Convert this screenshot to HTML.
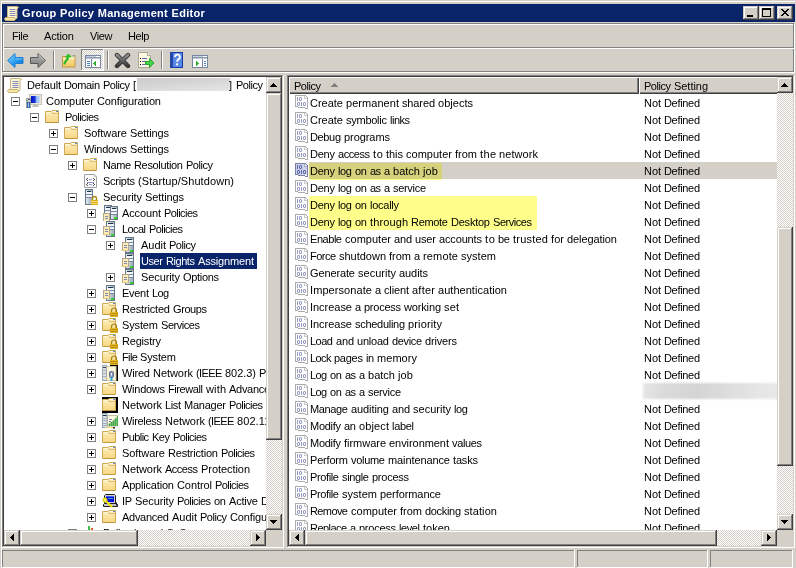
<!DOCTYPE html><html><head><meta charset="utf-8"><style>
html,body{margin:0;padding:0}body{width:796px;height:568px;overflow:hidden;position:relative;background:#d4d0c8;font-family:"Liberation Sans",sans-serif;font-size:11px;color:#000}
div,svg,span{position:absolute;display:block}
.t{white-space:nowrap;line-height:16px;height:16px;will-change:transform}
.dith{background-color:#d4d0c8;background-image:repeating-conic-gradient(#fff 0% 25%,#d4d0c8 0% 50%);background-size:2px 2px}
.clip{overflow:hidden}
</style></head><body>
<div style="left:0px;top:0px;width:796px;height:1px;background:#d4d0c8;"></div>
<div style="left:1px;top:1px;width:794px;height:1px;background:#ffffff;"></div>
<div style="left:1px;top:1px;width:1px;height:567px;background:#ffffff;"></div>
<div style="left:2px;top:4px;width:793px;height:18px;background:#0a246a;"></div>
<svg style="left:4px;top:5px;" width="16" height="16" viewBox="0 0 16 16"><path d="M3.5 1.5h9.5l1.5 1-1.5 1.5v9l-1 1H3.5z" fill="#fcf6d4" stroke="#c4b488"/>
<path d="M13 1.5l1.5 1-1.5 1.5z" fill="#e8c870"/>
<path d="M5.5 4.5h6M5.5 6.5h6M5.5 8.5h6M5.5 10.5h6" stroke="#8888b8"/>
<path d="M1.5 12.5h9l1 1.5-1 1.5h-9l-1-1.5z" fill="#f6e6a8" stroke="#c8b070"/></svg>
<span class="t" style="left:22px;top:5px;color:#fff;font-weight:bold;font-size:11px;letter-spacing:0.32px;">Group Policy Management Editor</span>
<div style="left:743px;top:6px;width:16px;height:14px;background:#d4d0c8;"></div>
<div style="left:743px;top:6px;width:16px;height:1px;background:#d4d0c8;"></div>
<div style="left:743px;top:6px;width:1px;height:14px;background:#d4d0c8;"></div>
<div style="left:744px;top:7px;width:14px;height:1px;background:#ffffff;"></div>
<div style="left:744px;top:7px;width:1px;height:12px;background:#ffffff;"></div>
<div style="left:744px;top:18px;width:14px;height:1px;background:#808080;"></div>
<div style="left:757px;top:7px;width:1px;height:12px;background:#808080;"></div>
<div style="left:743px;top:19px;width:16px;height:1px;background:#404040;"></div>
<div style="left:758px;top:6px;width:1px;height:14px;background:#404040;"></div>
<div style="left:759px;top:6px;width:16px;height:14px;background:#d4d0c8;"></div>
<div style="left:759px;top:6px;width:16px;height:1px;background:#d4d0c8;"></div>
<div style="left:759px;top:6px;width:1px;height:14px;background:#d4d0c8;"></div>
<div style="left:760px;top:7px;width:14px;height:1px;background:#ffffff;"></div>
<div style="left:760px;top:7px;width:1px;height:12px;background:#ffffff;"></div>
<div style="left:760px;top:18px;width:14px;height:1px;background:#808080;"></div>
<div style="left:773px;top:7px;width:1px;height:12px;background:#808080;"></div>
<div style="left:759px;top:19px;width:16px;height:1px;background:#404040;"></div>
<div style="left:774px;top:6px;width:1px;height:14px;background:#404040;"></div>
<div style="left:777px;top:6px;width:16px;height:14px;background:#d4d0c8;"></div>
<div style="left:777px;top:6px;width:16px;height:1px;background:#d4d0c8;"></div>
<div style="left:777px;top:6px;width:1px;height:14px;background:#d4d0c8;"></div>
<div style="left:778px;top:7px;width:14px;height:1px;background:#ffffff;"></div>
<div style="left:778px;top:7px;width:1px;height:12px;background:#ffffff;"></div>
<div style="left:778px;top:18px;width:14px;height:1px;background:#808080;"></div>
<div style="left:791px;top:7px;width:1px;height:12px;background:#808080;"></div>
<div style="left:777px;top:19px;width:16px;height:1px;background:#404040;"></div>
<div style="left:792px;top:6px;width:1px;height:14px;background:#404040;"></div>
<svg style="left:743px;top:6px;shape-rendering:crispEdges" width="16" height="14" viewBox="0 0 16 14"><path d="M4 9h6v2H4z" fill="#000"/></svg>
<svg style="left:759px;top:6px;shape-rendering:crispEdges" width="16" height="14" viewBox="0 0 16 14"><path d="M3 2h9v9H3zM4 4v6h7V4z" fill="#000" fill-rule="evenodd"/></svg>
<svg style="left:777px;top:6px;shape-rendering:crispEdges" width="16" height="14" viewBox="0 0 16 14"><path d="M4 3h1v1h-1zM5 3h1v1h-1zM10 3h1v1h-1zM11 3h1v1h-1zM5 4h1v1h-1zM6 4h1v1h-1zM9 4h1v1h-1zM10 4h1v1h-1zM6 5h1v1h-1zM7 5h1v1h-1zM8 5h1v1h-1zM9 5h1v1h-1zM7 6h1v1h-1zM8 6h1v1h-1zM6 7h1v1h-1zM7 7h1v1h-1zM8 7h1v1h-1zM9 7h1v1h-1zM5 8h1v1h-1zM6 8h1v1h-1zM9 8h1v1h-1zM10 8h1v1h-1zM4 9h1v1h-1zM5 9h1v1h-1zM10 9h1v1h-1zM11 9h1v1h-1z" fill="#000"/></svg>
<div style="left:2px;top:23px;width:1px;height:49px;background:#808080;"></div>
<div style="left:3px;top:24px;width:1px;height:49px;background:#ffffff;"></div>
<div style="left:2px;top:23px;width:792px;height:1px;background:#808080;"></div>
<div style="left:3px;top:24px;width:792px;height:1px;background:#ffffff;"></div>
<div style="left:4px;top:47px;width:790px;height:1px;background:#808080;"></div>
<div style="left:4px;top:48px;width:791px;height:1px;background:#ffffff;"></div>
<div style="left:793px;top:23px;width:1px;height:25px;background:#808080;"></div>
<div style="left:794px;top:24px;width:1px;height:25px;background:#ffffff;"></div>
<span class="t" style="left:12px;top:28px;letter-spacing:-0.400px">File</span>
<span class="t" style="left:44px;top:28px;letter-spacing:-0.116px">Action</span>
<span class="t" style="left:90px;top:28px;letter-spacing:-0.400px">View</span>
<span class="t" style="left:128px;top:28px;letter-spacing:-0.400px">Help</span>
<div style="left:2px;top:71px;width:792px;height:1px;background:#808080;"></div>
<div style="left:3px;top:72px;width:792px;height:1px;background:#ffffff;"></div>
<div style="left:793px;top:49px;width:1px;height:23px;background:#808080;"></div>
<div style="left:794px;top:49px;width:1px;height:24px;background:#ffffff;"></div>
<div style="left:53px;top:51px;width:1px;height:18px;background:#808080;"></div>
<div style="left:54px;top:51px;width:1px;height:18px;background:#ffffff;"></div>
<div style="left:107px;top:51px;width:1px;height:18px;background:#808080;"></div>
<div style="left:108px;top:51px;width:1px;height:18px;background:#ffffff;"></div>
<div style="left:161px;top:51px;width:1px;height:18px;background:#808080;"></div>
<div style="left:162px;top:51px;width:1px;height:18px;background:#ffffff;"></div>
<div style="left:2px;top:75px;width:282px;height:473px;background:#fff;"></div>
<div style="left:2px;top:75px;width:282px;height:1px;background:#808080;"></div>
<div style="left:2px;top:75px;width:1px;height:473px;background:#808080;"></div>
<div style="left:2px;top:547px;width:282px;height:1px;background:#ffffff;"></div>
<div style="left:283px;top:75px;width:1px;height:473px;background:#ffffff;"></div>
<div style="left:3px;top:76px;width:280px;height:1px;background:#404040;"></div>
<div style="left:3px;top:76px;width:1px;height:471px;background:#404040;"></div>
<div style="left:3px;top:546px;width:280px;height:1px;background:#d4d0c8;"></div>
<div style="left:282px;top:76px;width:1px;height:471px;background:#d4d0c8;"></div>
<div style="left:287px;top:75px;width:508px;height:473px;background:#fff;"></div>
<div style="left:287px;top:75px;width:508px;height:1px;background:#808080;"></div>
<div style="left:287px;top:75px;width:1px;height:473px;background:#808080;"></div>
<div style="left:287px;top:547px;width:508px;height:1px;background:#ffffff;"></div>
<div style="left:794px;top:75px;width:1px;height:473px;background:#ffffff;"></div>
<div style="left:288px;top:76px;width:506px;height:1px;background:#404040;"></div>
<div style="left:288px;top:76px;width:1px;height:471px;background:#404040;"></div>
<div style="left:288px;top:546px;width:506px;height:1px;background:#d4d0c8;"></div>
<div style="left:793px;top:76px;width:1px;height:471px;background:#d4d0c8;"></div>
<div style="left:2px;top:550px;width:573px;height:18px;background:#d4d0c8;"></div>
<div style="left:2px;top:550px;width:573px;height:1px;background:#808080;"></div>
<div style="left:2px;top:550px;width:1px;height:18px;background:#808080;"></div>
<div style="left:2px;top:567px;width:573px;height:1px;background:#ffffff;"></div>
<div style="left:574px;top:550px;width:1px;height:18px;background:#ffffff;"></div>
<div style="left:577px;top:550px;width:131px;height:18px;background:#d4d0c8;"></div>
<div style="left:577px;top:550px;width:131px;height:1px;background:#808080;"></div>
<div style="left:577px;top:550px;width:1px;height:18px;background:#808080;"></div>
<div style="left:577px;top:567px;width:131px;height:1px;background:#ffffff;"></div>
<div style="left:707px;top:550px;width:1px;height:18px;background:#ffffff;"></div>
<div style="left:710px;top:550px;width:83px;height:18px;background:#d4d0c8;"></div>
<div style="left:710px;top:550px;width:83px;height:1px;background:#808080;"></div>
<div style="left:710px;top:550px;width:1px;height:18px;background:#808080;"></div>
<div style="left:710px;top:567px;width:83px;height:1px;background:#ffffff;"></div>
<div style="left:792px;top:550px;width:1px;height:18px;background:#ffffff;"></div>
<svg style="left:6px;top:52px;" width="18" height="17" viewBox="0 0 18 17"><defs><linearGradient id="ab" x1="0" y1="0" x2="1" y2="1"><stop offset="0" stop-color="#8ad8ff"/><stop offset="0.55" stop-color="#2a9cf0"/><stop offset="1" stop-color="#0a60c8"/></linearGradient></defs>
<path d="M1.5 8.5L9 1.5V5.5H17V11.5H9V15.5z" fill="url(#ab)" stroke="#2080d8" stroke-linejoin="round"/>
<path d="M10 7h6" stroke="#b0e8ff" opacity="0.5"/></svg>
<svg style="left:29px;top:52px;" width="18" height="17" viewBox="0 0 18 17"><defs><linearGradient id="af" x1="0" y1="0" x2="0" y2="1"><stop offset="0" stop-color="#b4b4b4"/><stop offset="1" stop-color="#7a7a7a"/></linearGradient></defs>
<path d="M16.5 8.5L9 1.5V5.5H1.5V11.5H9V15.5z" fill="url(#af)" stroke="#585858" stroke-linejoin="round"/>
<path d="M9.5 2.5L15 8.5" stroke="#d8d8d8" opacity="0.7"/></svg>
<svg style="left:60px;top:52px;" width="17" height="17" viewBox="0 0 17 17"><defs><linearGradient id="fu" x1="0" y1="0" x2="0" y2="1"><stop offset="0" stop-color="#fdeaa8"/><stop offset="1" stop-color="#f0c860"/></linearGradient></defs>
<path d="M2.5 4.5h5l1-1h6.5v11.5h-12.5z" fill="url(#fu)" stroke="#c09848"/>
<path d="M3 6.5h11.5" stroke="#fff4c8"/>
<path d="M10 4h3" stroke="#fff"/><path d="M12 4h2" stroke="#60a8e8"/>
<path d="M4.5 11.5C5 9 7.5 8.5 8 5.5" stroke="#28b828" stroke-width="2.2" fill="none" stroke-linecap="round"/>
<path d="M5 6L8 1.5 12 5z" fill="#30c030"/></svg>
<div class="dith" style="left:81px;top:49px;width:23px;height:22px;background-position:-81px -49px"></div>
<div style="left:81px;top:49px;width:23px;height:1px;background:#808080"></div>
<div style="left:81px;top:49px;width:1px;height:22px;background:#808080"></div>
<div style="left:81px;top:70px;width:23px;height:1px;background:#fff"></div>
<div style="left:103px;top:49px;width:1px;height:22px;background:#fff"></div>
<svg style="left:85px;top:55px;shape-rendering:crispEdges" width="17" height="13" viewBox="0 0 17 13"><rect x="0.5" y="0.5" width="15" height="12" fill="#fff" stroke="#7888a0"/>
<path d="M1 2.5h14" stroke="#8898b0"/><path d="M1 1.5h10" stroke="#c8d0e0"/>
<rect x="12" y="1" width="1" height="1" fill="#fff"/><rect x="14" y="1" width="1" height="1" fill="#fff"/>
<path d="M1 3.5h14" stroke="#c0c8d8"/>
<path d="M6.5 4v8" stroke="#7888a0"/>
<path d="M2 6.5h3M2 8.5h3M2 10.5h3" stroke="#4a80d0"/>
<path d="M8 8.5L11 5.5V11.5z" fill="#30b030"/></svg>
<svg style="left:114px;top:52px;" width="17" height="17" viewBox="0 0 17 17"><defs><linearGradient id="dx" x1="0" y1="0" x2="0" y2="1"><stop offset="0" stop-color="#909090"/><stop offset="1" stop-color="#383838"/></linearGradient></defs>
<path d="M3 3L14 14M14 3L3 14" stroke="#303030" stroke-width="4.4" stroke-linecap="round"/>
<path d="M3 3L14 14M14 3L3 14" stroke="url(#dx)" stroke-width="2.6" stroke-linecap="round"/></svg>
<svg style="left:137px;top:52px;" width="18" height="17" viewBox="0 0 18 17"><path d="M1.5 0.5h9l3 3v12h-12z" fill="#fbf6dc" stroke="#a8a8a0"/>
<path d="M10.5 0.5v3h3" fill="#fff" stroke="#a8a8a0"/>
<rect x="3" y="6" width="1" height="1" fill="#000"/><rect x="3" y="9" width="1" height="1" fill="#000"/><rect x="3" y="12" width="1" height="1" fill="#000"/>
<path d="M5 6.5h5M5 9.5h4M5 12.5h4" stroke="#6070c0"/>
<path d="M8.5 9.5h4v-3l4.5 4.5-4.5 4.5v-3h-4z" fill="#48d048" stroke="#28a828"/></svg>
<svg style="left:170px;top:52px;" width="13" height="16" viewBox="0 0 13 16"><rect x="0" y="0" width="13" height="16" fill="#1838a8"/>
<rect x="3" y="1" width="9" height="14" fill="#5a88e8"/>
<rect x="0" y="0" width="3" height="16" fill="#2848a8"/>
<path d="M4.9 5a2.5 2.5 0 1 1 3.8 2.1c-1 .6-1.6 1.1-1.6 2.6" fill="none" stroke="#fff" stroke-width="1.9"/>
<rect x="6.1" y="11.3" width="2" height="2" fill="#fff"/></svg>
<svg style="left:192px;top:55px;shape-rendering:crispEdges" width="17" height="13" viewBox="0 0 17 13"><rect x="0.5" y="0.5" width="15" height="12" fill="#fff" stroke="#7888a0"/>
<path d="M1 2.5h14" stroke="#8898b0"/><path d="M1 1.5h10" stroke="#c8d0e0"/>
<rect x="12" y="1" width="1" height="1" fill="#fff"/><rect x="14" y="1" width="1" height="1" fill="#fff"/>
<path d="M1 3.5h14" stroke="#c0c8d8"/>
<path d="M10.5 4v8" stroke="#7888a0"/>
<path d="M12 6.5h2M12 8.5h2M12 10.5h2" stroke="#4a80d0"/>
<path d="M4 5.5L7 8.5 4 11.5z" fill="#30b030"/></svg>
<div class="clip" style="left:4px;top:77px;width:262px;height:453px;background:#fff">
<svg width="0" height="0" style="left:0;top:0"><defs><linearGradient id="fg" x1="0" y1="0" x2="0" y2="1"><stop offset="0" stop-color="#fdf0c0"/><stop offset="1" stop-color="#f6d682"/></linearGradient></defs></svg>
<svg style="left:3px;top:0px;" width="16" height="16" viewBox="0 0 16 16"><path d="M3.5 1.5h9.5l1.5 1-1.5 1.5v9l-1 1H3.5z" fill="#fcf6d4" stroke="#c4b488"/>
<path d="M13 1.5l1.5 1-1.5 1.5z" fill="#e8c870"/>
<path d="M5.5 4.5h6M5.5 6.5h6M5.5 8.5h6M5.5 10.5h6" stroke="#8888b8"/>
<path d="M1.5 12.5h9l1 1.5-1 1.5h-9l-1-1.5z" fill="#f6e6a8" stroke="#c8b070"/></svg>
<span class="t" style="left:23px;top:0px;"><span style="left:0px;top:0;letter-spacing:-0.143px">Default</span><span style="left:37px;top:0;letter-spacing:-0.381px">Domain</span><span style="left:76px;top:0;letter-spacing:-0.469px">Policy</span><span style="left:106px;top:0;letter-spacing:0.600px">[</span></span>
<div style="left:133px;top:1px;width:93px;height:13px;background:linear-gradient(175deg,#cbcbcb 0%,#d6d6d6 45%,#e6e6e6 100%)"></div>
<span class="t" style="left:225px;top:0px;"><span style="left:0px;top:0;letter-spacing:0.600px">]</span><span style="left:7px;top:0;letter-spacing:-0.469px">Policy</span></span>
<svg style="left:7px;top:20px;shape-rendering:crispEdges" width="9" height="9" viewBox="0 0 9 9"><rect x="0.5" y="0.5" width="8" height="8" fill="#fff" stroke="#808080"/><path d="M2 4h5v1H2z" fill="#000"/></svg>
<svg style="left:22px;top:16px;" width="16" height="16" viewBox="0 0 16 16"><defs><linearGradient id="scr" x1="0" y1="0" x2="1" y2="0"><stop offset="0" stop-color="#0010c0"/><stop offset="0.45" stop-color="#1c38e0"/><stop offset="0.6" stop-color="#90b4f4"/><stop offset="1" stop-color="#c8dcfc"/></linearGradient></defs>
<rect x="3.5" y="1.5" width="12" height="10" fill="#e8e4d8" stroke="#c8c4b8"/>
<rect x="5" y="3" width="9" height="7" fill="url(#scr)"/>
<path d="M7 12h5v1H7z" fill="#b8b8b8"/><path d="M6 13.5h7" stroke="#c8c8c8"/>
<rect x="0.5" y="5.5" width="4" height="9" fill="#d0d0d0" stroke="#a0a0a0"/>
<path d="M2 6.5h2" stroke="#606060"/><rect x="1" y="7" width="1" height="1" fill="#40c040"/>
<rect x="1.5" y="9.5" width="2" height="5" fill="#a8d0f0" stroke="#3060b0"/></svg>
<span class="t" style="left:42px;top:16px;"><span style="left:0px;top:0;letter-spacing:-0.042px">Computer</span><span style="left:51px;top:0;letter-spacing:-0.120px">Configuration</span></span>
<svg style="left:26px;top:36px;shape-rendering:crispEdges" width="9" height="9" viewBox="0 0 9 9"><rect x="0.5" y="0.5" width="8" height="8" fill="#fff" stroke="#808080"/><path d="M2 4h5v1H2z" fill="#000"/></svg>
<svg style="left:41px;top:32px;" width="16" height="16" viewBox="0 0 16 16"><path d="M0.5 13.5V2.5H6l1-1h6.5v12z" fill="url(#fg)" stroke="#d0a858"/>
<path d="M6.5 2.5l1 2h6" fill="none" stroke="#dcbc70"/>
<path d="M1 3.5h5" stroke="#fff8dc"/>
<path d="M8 2.5h3" stroke="#fff"/><path d="M11 2.5h2" stroke="#4a90e0"/>
<path d="M1 13.5h12" stroke="#c09440"/></svg>
<span class="t" style="left:61px;top:32px;"><span style="left:0px;top:0;letter-spacing:-0.558px">Policies</span></span>
<svg style="left:45px;top:52px;shape-rendering:crispEdges" width="9" height="9" viewBox="0 0 9 9"><rect x="0.5" y="0.5" width="8" height="8" fill="#fff" stroke="#808080"/><path d="M2 4h5v1H2z" fill="#000"/><path d="M4 2h1v5H4z" fill="#000"/></svg>
<svg style="left:60px;top:48px;" width="16" height="16" viewBox="0 0 16 16"><path d="M0.5 13.5V2.5H6l1-1h6.5v12z" fill="url(#fg)" stroke="#d0a858"/>
<path d="M6.5 2.5l1 2h6" fill="none" stroke="#dcbc70"/>
<path d="M1 3.5h5" stroke="#fff8dc"/>
<path d="M8 2.5h3" stroke="#fff"/><path d="M11 2.5h2" stroke="#4a90e0"/>
<path d="M1 13.5h12" stroke="#c09440"/></svg>
<span class="t" style="left:80px;top:48px;"><span style="left:0px;top:0;letter-spacing:-0.060px">Software</span><span style="left:46px;top:0;letter-spacing:-0.107px">Settings</span></span>
<svg style="left:45px;top:68px;shape-rendering:crispEdges" width="9" height="9" viewBox="0 0 9 9"><rect x="0.5" y="0.5" width="8" height="8" fill="#fff" stroke="#808080"/><path d="M2 4h5v1H2z" fill="#000"/></svg>
<svg style="left:60px;top:64px;" width="16" height="16" viewBox="0 0 16 16"><path d="M0.5 13.5V2.5H6l1-1h6.5v12z" fill="url(#fg)" stroke="#d0a858"/>
<path d="M6.5 2.5l1 2h6" fill="none" stroke="#dcbc70"/>
<path d="M1 3.5h5" stroke="#fff8dc"/>
<path d="M8 2.5h3" stroke="#fff"/><path d="M11 2.5h2" stroke="#4a90e0"/>
<path d="M1 13.5h12" stroke="#c09440"/></svg>
<span class="t" style="left:80px;top:64px;"><span style="left:0px;top:0;letter-spacing:-0.271px">Windows</span><span style="left:46px;top:0;letter-spacing:-0.107px">Settings</span></span>
<svg style="left:64px;top:84px;shape-rendering:crispEdges" width="9" height="9" viewBox="0 0 9 9"><rect x="0.5" y="0.5" width="8" height="8" fill="#fff" stroke="#808080"/><path d="M2 4h5v1H2z" fill="#000"/><path d="M4 2h1v5H4z" fill="#000"/></svg>
<svg style="left:79px;top:80px;" width="16" height="16" viewBox="0 0 16 16"><path d="M0.5 13.5V2.5H6l1-1h6.5v12z" fill="url(#fg)" stroke="#d0a858"/>
<path d="M6.5 2.5l1 2h6" fill="none" stroke="#dcbc70"/>
<path d="M1 3.5h5" stroke="#fff8dc"/>
<path d="M8 2.5h3" stroke="#fff"/><path d="M11 2.5h2" stroke="#4a90e0"/>
<path d="M1 13.5h12" stroke="#c09440"/></svg>
<span class="t" style="left:99px;top:80px;"><span style="left:0px;top:0;letter-spacing:-0.448px">Name</span><span style="left:31px;top:0;letter-spacing:-0.332px">Resolution</span><span style="left:83px;top:0;letter-spacing:-0.469px">Policy</span></span>
<svg style="left:79px;top:96px;" width="16" height="16" viewBox="0 0 16 16"><path d="M1.5 1.5h10l2 2v11h-12z" fill="#fcfcff" stroke="#a0a0a4"/>
<path d="M11.5 1.5v2h2" fill="#e8e8e8" stroke="#c0c0c0"/>
<g shape-rendering="crispEdges"><path d="M4 5h1v1H4zM3 6h1v1H3zM4 7h1v1H4zM10 5h1v1h-1zM11 6h1v1h-1zM10 7h1v1h-1z M4 10h1v1H4zM3 11h1v1H3zM4 12h1v1H4zM10 10h1v1h-1zM11 11h1v1h-1zM10 12h1v1h-1z" fill="#505060"/>
<path d="M6 6h3v1H6zM4 9h7v1H4zM6 11h3v1H6z" fill="#9898d0"/></g></svg>
<span class="t" style="left:99px;top:96px;"><span style="left:0px;top:0;letter-spacing:-0.271px">Scripts</span><span style="left:35px;top:0;letter-spacing:0.072px">(Startup/Shutdown)</span></span>
<svg style="left:64px;top:116px;shape-rendering:crispEdges" width="9" height="9" viewBox="0 0 9 9"><rect x="0.5" y="0.5" width="8" height="8" fill="#fff" stroke="#808080"/><path d="M2 4h5v1H2z" fill="#000"/></svg>
<svg style="left:79px;top:112px;" width="16" height="16" viewBox="0 0 16 16"><defs><linearGradient id="sv" x1="0" y1="0" x2="1" y2="0"><stop offset="0" stop-color="#e8eef4"/><stop offset="1" stop-color="#98a6b4"/></linearGradient></defs><rect x="2.5" y="0.5" width="7" height="15" fill="url(#sv)" stroke="#687888"/><path d="M4 2.5h4" stroke="#183848"/><rect x="3" y="3" width="6" height="2" fill="#f4f8fc"/><path d="M3 5.5h6" stroke="#7888a0"/><rect x="3" y="6" width="6" height="2" fill="#f0f4f8"/><path d="M3 8.5h6" stroke="#7888a0"/><path d="M9.5 11V9.5a2 2 0 0 1 4 0V11" fill="none" stroke="#b08810" stroke-width="1.4"/>
<rect x="8" y="11" width="7" height="5" fill="#e0b020"/><path d="M8 12.5h7M8 14.5h7" stroke="#f4d860"/></svg>
<span class="t" style="left:99px;top:112px;"><span style="left:0px;top:0;letter-spacing:-0.107px">Security</span><span style="left:42px;top:0;letter-spacing:-0.107px">Settings</span></span>
<svg style="left:83px;top:132px;shape-rendering:crispEdges" width="9" height="9" viewBox="0 0 9 9"><rect x="0.5" y="0.5" width="8" height="8" fill="#fff" stroke="#808080"/><path d="M2 4h5v1H2z" fill="#000"/><path d="M4 2h1v5H4z" fill="#000"/></svg>
<svg style="left:98px;top:128px;" width="16" height="16" viewBox="0 0 16 16"><defs><linearGradient id="sv" x1="0" y1="0" x2="1" y2="0"><stop offset="0" stop-color="#e8eef4"/><stop offset="1" stop-color="#98a6b4"/></linearGradient></defs><rect x="2.5" y="0.5" width="7" height="8" fill="url(#sv)" stroke="#687888"/><path d="M4 2.5h4" stroke="#183848"/><rect x="3" y="3" width="6" height="2" fill="#f4f8fc"/><path d="M3 5.5h6" stroke="#7888a0"/><rect x="3" y="6" width="6" height="2" fill="#f0f4f8"/><path d="M3 8.5h6" stroke="#7888a0"/><rect x="8.5" y="1.5" width="7" height="13" fill="url(#sv)" stroke="#687888"/><path d="M10 3.5h4" stroke="#183848"/><rect x="9" y="4" width="6" height="2" fill="#f4f8fc"/><path d="M9 6.5h6" stroke="#7888a0"/><rect x="9" y="7" width="6" height="2" fill="#f0f4f8"/><path d="M9 9.5h6" stroke="#7888a0"/><rect x="1.5" y="8.5" width="6" height="8" fill="#fcecb4" stroke="#b4a888"/><path d="M3 11.5h3M3 13.5h3" stroke="#8088b8"/><path d="M0.5 16.5h7" stroke="#e4cc84"/><rect x="12" y="12" width="3" height="2" fill="#30d030"/></svg>
<span class="t" style="left:118px;top:128px;"><span style="left:0px;top:0;letter-spacing:-0.125px">Account</span><span style="left:42px;top:0;letter-spacing:-0.558px">Policies</span></span>
<svg style="left:83px;top:148px;shape-rendering:crispEdges" width="9" height="9" viewBox="0 0 9 9"><rect x="0.5" y="0.5" width="8" height="8" fill="#fff" stroke="#808080"/><path d="M2 4h5v1H2z" fill="#000"/></svg>
<svg style="left:98px;top:144px;" width="16" height="16" viewBox="0 0 16 16"><defs><linearGradient id="sv" x1="0" y1="0" x2="1" y2="0"><stop offset="0" stop-color="#e8eef4"/><stop offset="1" stop-color="#98a6b4"/></linearGradient></defs><rect x="4.5" y="0.5" width="8" height="15" fill="url(#sv)" stroke="#687888"/><path d="M6 2.5h5" stroke="#183848"/><rect x="5" y="3" width="7" height="2" fill="#f4f8fc"/><path d="M5 5.5h7" stroke="#7888a0"/><rect x="5" y="6" width="7" height="2" fill="#f0f4f8"/><path d="M5 8.5h7" stroke="#7888a0"/><rect x="1.5" y="5.5" width="6" height="8" fill="#fcecb4" stroke="#b4a888"/><path d="M3 8.5h3M3 10.5h3" stroke="#8088b8"/><path d="M0.5 13.5h7" stroke="#e4cc84"/><rect x="9" y="13" width="3" height="2" fill="#30d030"/></svg>
<span class="t" style="left:118px;top:144px;"><span style="left:0px;top:0;letter-spacing:-0.574px">Local</span><span style="left:27px;top:0;letter-spacing:-0.558px">Policies</span></span>
<svg style="left:102px;top:164px;shape-rendering:crispEdges" width="9" height="9" viewBox="0 0 9 9"><rect x="0.5" y="0.5" width="8" height="8" fill="#fff" stroke="#808080"/><path d="M2 4h5v1H2z" fill="#000"/><path d="M4 2h1v5H4z" fill="#000"/></svg>
<svg style="left:117px;top:160px;" width="16" height="16" viewBox="0 0 16 16"><defs><linearGradient id="sv" x1="0" y1="0" x2="1" y2="0"><stop offset="0" stop-color="#e8eef4"/><stop offset="1" stop-color="#98a6b4"/></linearGradient></defs><rect x="4.5" y="0.5" width="8" height="15" fill="url(#sv)" stroke="#687888"/><path d="M6 2.5h5" stroke="#183848"/><rect x="5" y="3" width="7" height="2" fill="#f4f8fc"/><path d="M5 5.5h7" stroke="#7888a0"/><rect x="5" y="6" width="7" height="2" fill="#f0f4f8"/><path d="M5 8.5h7" stroke="#7888a0"/><rect x="1.5" y="5.5" width="6" height="8" fill="#fcecb4" stroke="#b4a888"/><path d="M3 8.5h3M3 10.5h3" stroke="#8088b8"/><path d="M0.5 13.5h7" stroke="#e4cc84"/><rect x="9" y="13" width="3" height="2" fill="#30d030"/></svg>
<span class="t" style="left:137px;top:160px;"><span style="left:0px;top:0;letter-spacing:-0.020px">Audit</span><span style="left:28px;top:0;letter-spacing:-0.469px">Policy</span></span>
<svg style="left:117px;top:176px;" width="16" height="16" viewBox="0 0 16 16"><defs><linearGradient id="sv" x1="0" y1="0" x2="1" y2="0"><stop offset="0" stop-color="#e8eef4"/><stop offset="1" stop-color="#98a6b4"/></linearGradient></defs><rect x="4.5" y="0.5" width="8" height="15" fill="url(#sv)" stroke="#687888"/><path d="M6 2.5h5" stroke="#183848"/><rect x="5" y="3" width="7" height="2" fill="#f4f8fc"/><path d="M5 5.5h7" stroke="#7888a0"/><rect x="5" y="6" width="7" height="2" fill="#f0f4f8"/><path d="M5 8.5h7" stroke="#7888a0"/><rect x="1.5" y="5.5" width="6" height="8" fill="#fcecb4" stroke="#b4a888"/><path d="M3 8.5h3M3 10.5h3" stroke="#8088b8"/><path d="M0.5 13.5h7" stroke="#e4cc84"/><rect x="9" y="13" width="3" height="2" fill="#30d030"/></svg>
<div style="left:136px;top:176px;width:117px;height:16px;background:#0a246a"></div>
<span class="t" style="left:137px;top:176px;color:#fff"><span style="left:0px;top:0;letter-spacing:-0.411px">User</span><span style="left:25px;top:0;letter-spacing:-0.438px">Rights</span><span style="left:57px;top:0;letter-spacing:-0.165px">Assignment</span></span>
<svg style="left:102px;top:196px;shape-rendering:crispEdges" width="9" height="9" viewBox="0 0 9 9"><rect x="0.5" y="0.5" width="8" height="8" fill="#fff" stroke="#808080"/><path d="M2 4h5v1H2z" fill="#000"/><path d="M4 2h1v5H4z" fill="#000"/></svg>
<svg style="left:117px;top:192px;" width="16" height="16" viewBox="0 0 16 16"><defs><linearGradient id="sv" x1="0" y1="0" x2="1" y2="0"><stop offset="0" stop-color="#e8eef4"/><stop offset="1" stop-color="#98a6b4"/></linearGradient></defs><rect x="4.5" y="0.5" width="8" height="15" fill="url(#sv)" stroke="#687888"/><path d="M6 2.5h5" stroke="#183848"/><rect x="5" y="3" width="7" height="2" fill="#f4f8fc"/><path d="M5 5.5h7" stroke="#7888a0"/><rect x="5" y="6" width="7" height="2" fill="#f0f4f8"/><path d="M5 8.5h7" stroke="#7888a0"/><rect x="1.5" y="5.5" width="6" height="8" fill="#fcecb4" stroke="#b4a888"/><path d="M3 8.5h3M3 10.5h3" stroke="#8088b8"/><path d="M0.5 13.5h7" stroke="#e4cc84"/><rect x="9" y="13" width="3" height="2" fill="#30d030"/></svg>
<span class="t" style="left:137px;top:192px;"><span style="left:0px;top:0;letter-spacing:-0.107px">Security</span><span style="left:42px;top:0;letter-spacing:-0.320px">Options</span></span>
<svg style="left:83px;top:212px;shape-rendering:crispEdges" width="9" height="9" viewBox="0 0 9 9"><rect x="0.5" y="0.5" width="8" height="8" fill="#fff" stroke="#808080"/><path d="M2 4h5v1H2z" fill="#000"/><path d="M4 2h1v5H4z" fill="#000"/></svg>
<svg style="left:98px;top:208px;" width="16" height="16" viewBox="0 0 16 16"><defs><linearGradient id="sv" x1="0" y1="0" x2="1" y2="0"><stop offset="0" stop-color="#e8eef4"/><stop offset="1" stop-color="#98a6b4"/></linearGradient></defs><rect x="4.5" y="0.5" width="8" height="15" fill="url(#sv)" stroke="#687888"/><path d="M6 2.5h5" stroke="#183848"/><rect x="5" y="3" width="7" height="2" fill="#f4f8fc"/><path d="M5 5.5h7" stroke="#7888a0"/><rect x="5" y="6" width="7" height="2" fill="#f0f4f8"/><path d="M5 8.5h7" stroke="#7888a0"/><rect x="1.5" y="5.5" width="6" height="8" fill="#fcecb4" stroke="#b4a888"/><path d="M3 8.5h3M3 10.5h3" stroke="#8088b8"/><path d="M0.5 13.5h7" stroke="#e4cc84"/><rect x="9" y="13" width="3" height="2" fill="#30d030"/></svg>
<span class="t" style="left:118px;top:208px;"><span style="left:0px;top:0;letter-spacing:-0.285px">Event</span><span style="left:30px;top:0;letter-spacing:-0.600px">Log</span></span>
<svg style="left:83px;top:228px;shape-rendering:crispEdges" width="9" height="9" viewBox="0 0 9 9"><rect x="0.5" y="0.5" width="8" height="8" fill="#fff" stroke="#808080"/><path d="M2 4h5v1H2z" fill="#000"/><path d="M4 2h1v5H4z" fill="#000"/></svg>
<svg style="left:98px;top:224px;" width="16" height="16" viewBox="0 0 16 16"><path d="M0.5 13.5V2.5H6l1-1h6.5v12z" fill="url(#fg)" stroke="#d0a858"/>
<path d="M6.5 2.5l1 2h6" fill="none" stroke="#dcbc70"/>
<path d="M1 3.5h5" stroke="#fff8dc"/>
<path d="M8 2.5h3" stroke="#fff"/><path d="M11 2.5h2" stroke="#4a90e0"/>
<path d="M1 13.5h12" stroke="#c09440"/><path d="M9.5 11V9.5a2.5 2.5 0 0 1 5 0V11" fill="none" stroke="#a88010" stroke-width="1.2"/>
<rect x="8" y="11" width="8" height="5" fill="#e8b820"/><path d="M8 12.5h8M8 14.5h8" stroke="#b88a10"/></svg>
<span class="t" style="left:118px;top:224px;"><span style="left:0px;top:0;letter-spacing:-0.170px">Restricted</span><span style="left:51px;top:0;letter-spacing:-0.416px">Groups</span></span>
<svg style="left:83px;top:244px;shape-rendering:crispEdges" width="9" height="9" viewBox="0 0 9 9"><rect x="0.5" y="0.5" width="8" height="8" fill="#fff" stroke="#808080"/><path d="M2 4h5v1H2z" fill="#000"/><path d="M4 2h1v5H4z" fill="#000"/></svg>
<svg style="left:98px;top:240px;" width="16" height="16" viewBox="0 0 16 16"><path d="M0.5 13.5V2.5H6l1-1h6.5v12z" fill="url(#fg)" stroke="#d0a858"/>
<path d="M6.5 2.5l1 2h6" fill="none" stroke="#dcbc70"/>
<path d="M1 3.5h5" stroke="#fff8dc"/>
<path d="M8 2.5h3" stroke="#fff"/><path d="M11 2.5h2" stroke="#4a90e0"/>
<path d="M1 13.5h12" stroke="#c09440"/><path d="M9.5 11V9.5a2.5 2.5 0 0 1 5 0V11" fill="none" stroke="#a88010" stroke-width="1.2"/>
<rect x="8" y="11" width="8" height="5" fill="#e8b820"/><path d="M8 12.5h8M8 14.5h8" stroke="#b88a10"/></svg>
<span class="t" style="left:118px;top:240px;"><span style="left:0px;top:0;letter-spacing:-0.138px">System</span><span style="left:39px;top:0;letter-spacing:-0.455px">Services</span></span>
<svg style="left:83px;top:260px;shape-rendering:crispEdges" width="9" height="9" viewBox="0 0 9 9"><rect x="0.5" y="0.5" width="8" height="8" fill="#fff" stroke="#808080"/><path d="M2 4h5v1H2z" fill="#000"/><path d="M4 2h1v5H4z" fill="#000"/></svg>
<svg style="left:98px;top:256px;" width="16" height="16" viewBox="0 0 16 16"><path d="M0.5 13.5V2.5H6l1-1h6.5v12z" fill="url(#fg)" stroke="#d0a858"/>
<path d="M6.5 2.5l1 2h6" fill="none" stroke="#dcbc70"/>
<path d="M1 3.5h5" stroke="#fff8dc"/>
<path d="M8 2.5h3" stroke="#fff"/><path d="M11 2.5h2" stroke="#4a90e0"/>
<path d="M1 13.5h12" stroke="#c09440"/><path d="M9.5 11V9.5a2.5 2.5 0 0 1 5 0V11" fill="none" stroke="#a88010" stroke-width="1.2"/>
<rect x="8" y="11" width="8" height="5" fill="#e8b820"/><path d="M8 12.5h8M8 14.5h8" stroke="#b88a10"/></svg>
<span class="t" style="left:118px;top:256px;"><span style="left:0px;top:0;letter-spacing:-0.192px">Registry</span></span>
<svg style="left:83px;top:276px;shape-rendering:crispEdges" width="9" height="9" viewBox="0 0 9 9"><rect x="0.5" y="0.5" width="8" height="8" fill="#fff" stroke="#808080"/><path d="M2 4h5v1H2z" fill="#000"/><path d="M4 2h1v5H4z" fill="#000"/></svg>
<svg style="left:98px;top:272px;" width="16" height="16" viewBox="0 0 16 16"><path d="M0.5 13.5V2.5H6l1-1h6.5v12z" fill="url(#fg)" stroke="#d0a858"/>
<path d="M6.5 2.5l1 2h6" fill="none" stroke="#dcbc70"/>
<path d="M1 3.5h5" stroke="#fff8dc"/>
<path d="M8 2.5h3" stroke="#fff"/><path d="M11 2.5h2" stroke="#4a90e0"/>
<path d="M1 13.5h12" stroke="#c09440"/><path d="M9.5 11V9.5a2.5 2.5 0 0 1 5 0V11" fill="none" stroke="#a88010" stroke-width="1.2"/>
<rect x="8" y="11" width="8" height="5" fill="#e8b820"/><path d="M8 12.5h8M8 14.5h8" stroke="#b88a10"/></svg>
<span class="t" style="left:118px;top:272px;"><span style="left:0px;top:0;letter-spacing:-0.600px">File</span><span style="left:18px;top:0;letter-spacing:-0.138px">System</span></span>
<svg style="left:83px;top:292px;shape-rendering:crispEdges" width="9" height="9" viewBox="0 0 9 9"><rect x="0.5" y="0.5" width="8" height="8" fill="#fff" stroke="#808080"/><path d="M2 4h5v1H2z" fill="#000"/><path d="M4 2h1v5H4z" fill="#000"/></svg>
<svg style="left:98px;top:288px;" width="16" height="16" viewBox="0 0 16 16"><rect x="8" y="0" width="8" height="2" fill="#000"/><rect x="14" y="1" width="2" height="15" fill="#000"/>
<rect x="4.5" y="1.5" width="9.5" height="14" fill="#fdf6d8" stroke="#d0c8a8"/>
<rect x="0.5" y="0.5" width="4" height="15" fill="#dde1e6" stroke="#a0a8b0"/>
<path d="M1 2.5h3" stroke="#304050"/><path d="M1 5.5h3M1 8.5h3M1 11.5h3" stroke="#a8b0b8"/>
<rect x="7.5" y="6.5" width="4" height="6" rx="1" fill="#8898b8" stroke="#607090"/>
<path d="M9.5 8v2.5" stroke="#fff"/>
<path d="M9.5 12.5v3.5" stroke="#20a8e8" stroke-width="2"/>
<path d="M2 13.5h6" stroke="#f0e0a0"/></svg>
<span class="t" style="left:118px;top:288px;"><span style="left:0px;top:0;letter-spacing:-0.184px">Wired</span><span style="left:31px;top:0;letter-spacing:-0.057px">Network</span><span style="left:74px;top:0;letter-spacing:-0.600px">(IEEE</span><span style="left:103px;top:0;letter-spacing:-0.041px">802.3)</span><span style="left:137px;top:0;letter-spacing:-0.558px">Policies</span></span>
<svg style="left:83px;top:308px;shape-rendering:crispEdges" width="9" height="9" viewBox="0 0 9 9"><rect x="0.5" y="0.5" width="8" height="8" fill="#fff" stroke="#808080"/><path d="M2 4h5v1H2z" fill="#000"/><path d="M4 2h1v5H4z" fill="#000"/></svg>
<svg style="left:98px;top:304px;" width="16" height="16" viewBox="0 0 16 16"><path d="M0.5 13.5V2.5H6l1-1h6.5v12z" fill="url(#fg)" stroke="#d0a858"/>
<path d="M6.5 2.5l1 2h6" fill="none" stroke="#dcbc70"/>
<path d="M1 3.5h5" stroke="#fff8dc"/>
<path d="M8 2.5h3" stroke="#fff"/><path d="M11 2.5h2" stroke="#4a90e0"/>
<path d="M1 13.5h12" stroke="#c09440"/></svg>
<span class="t" style="left:118px;top:304px;"><span style="left:0px;top:0;letter-spacing:-0.271px">Windows</span><span style="left:46px;top:0;letter-spacing:-0.415px">Firewall</span><span style="left:84px;top:0;letter-spacing:0.146px">with</span><span style="left:107px;top:0;letter-spacing:-0.277px">Advanced</span><span style="left:157px;top:0;letter-spacing:-0.107px">Security</span></span>
<svg style="left:98px;top:320px;" width="16" height="16" viewBox="0 0 16 16"><rect x="0" y="0" width="16" height="16" fill="#000"/><g transform="translate(0,0)"><path d="M0.5 13.5V2.5H6l1-1h6.5v12z" fill="url(#fg)" stroke="#d0a858"/>
<path d="M6.5 2.5l1 2h6" fill="none" stroke="#dcbc70"/>
<path d="M1 3.5h5" stroke="#fff8dc"/>
<path d="M8 2.5h3" stroke="#fff"/><path d="M11 2.5h2" stroke="#4a90e0"/>
<path d="M1 13.5h12" stroke="#c09440"/></g></svg>
<span class="t" style="left:118px;top:320px;"><span style="left:0px;top:0;letter-spacing:-0.057px">Network</span><span style="left:43px;top:0;letter-spacing:-0.375px">List</span><span style="left:62px;top:0;letter-spacing:-0.237px">Manager</span><span style="left:107px;top:0;letter-spacing:-0.558px">Policies</span></span>
<svg style="left:83px;top:340px;shape-rendering:crispEdges" width="9" height="9" viewBox="0 0 9 9"><rect x="0.5" y="0.5" width="8" height="8" fill="#fff" stroke="#808080"/><path d="M2 4h5v1H2z" fill="#000"/><path d="M4 2h1v5H4z" fill="#000"/></svg>
<svg style="left:98px;top:336px;" width="16" height="16" viewBox="0 0 16 16"><rect x="5.5" y="2.5" width="10" height="10.5" fill="#fdf8e0" stroke="#c8c0a0"/>
<rect x="0.5" y="0.5" width="4.5" height="14" fill="#dde3ea" stroke="#98a4b0"/>
<path d="M1 2.5h3.5" stroke="#183848"/><path d="M1 5.5h3.5M1 7.5h3.5M1 10.5h3.5M1 12.5h3.5" stroke="#a8b0bc"/>
<path d="M7 6.5h3M7 8.5h2" stroke="#8088c0"/>
<path d="M7.5 13V10.5M9.5 13V9M11.5 13V7.5M13.5 13V5.5M15.5 13V3.5" stroke="#1c8c2c" stroke-width="1.6"/>
<path d="M7.5 13V11.5M9.5 13V10M11.5 13V8.5M13.5 13V6.5M15.5 13V4.5" stroke="#70d070" stroke-width="0.5"/>
<path d="M3 14.5h9" stroke="#f0d890" stroke-width="1.5"/><rect x="11" y="14" width="2" height="1.5" fill="#303030"/></svg>
<span class="t" style="left:118px;top:336px;"><span style="left:0px;top:0;letter-spacing:-0.310px">Wireless</span><span style="left:43px;top:0;letter-spacing:-0.057px">Network</span><span style="left:86px;top:0;letter-spacing:-0.600px">(IEEE</span><span style="left:115px;top:0;letter-spacing:0.083px">802.11)</span><span style="left:155px;top:0;letter-spacing:-0.558px">Policies</span></span>
<svg style="left:83px;top:356px;shape-rendering:crispEdges" width="9" height="9" viewBox="0 0 9 9"><rect x="0.5" y="0.5" width="8" height="8" fill="#fff" stroke="#808080"/><path d="M2 4h5v1H2z" fill="#000"/><path d="M4 2h1v5H4z" fill="#000"/></svg>
<svg style="left:98px;top:352px;" width="16" height="16" viewBox="0 0 16 16"><path d="M0.5 13.5V2.5H6l1-1h6.5v12z" fill="url(#fg)" stroke="#d0a858"/>
<path d="M6.5 2.5l1 2h6" fill="none" stroke="#dcbc70"/>
<path d="M1 3.5h5" stroke="#fff8dc"/>
<path d="M8 2.5h3" stroke="#fff"/><path d="M11 2.5h2" stroke="#4a90e0"/>
<path d="M1 13.5h12" stroke="#c09440"/></svg>
<span class="t" style="left:118px;top:352px;"><span style="left:0px;top:0;letter-spacing:-0.594px">Public</span><span style="left:30px;top:0;letter-spacing:-0.484px">Key</span><span style="left:51px;top:0;letter-spacing:-0.558px">Policies</span></span>
<svg style="left:83px;top:372px;shape-rendering:crispEdges" width="9" height="9" viewBox="0 0 9 9"><rect x="0.5" y="0.5" width="8" height="8" fill="#fff" stroke="#808080"/><path d="M2 4h5v1H2z" fill="#000"/><path d="M4 2h1v5H4z" fill="#000"/></svg>
<svg style="left:98px;top:368px;" width="16" height="16" viewBox="0 0 16 16"><path d="M0.5 13.5V2.5H6l1-1h6.5v12z" fill="url(#fg)" stroke="#d0a858"/>
<path d="M6.5 2.5l1 2h6" fill="none" stroke="#dcbc70"/>
<path d="M1 3.5h5" stroke="#fff8dc"/>
<path d="M8 2.5h3" stroke="#fff"/><path d="M11 2.5h2" stroke="#4a90e0"/>
<path d="M1 13.5h12" stroke="#c09440"/></svg>
<span class="t" style="left:118px;top:368px;"><span style="left:0px;top:0;letter-spacing:-0.060px">Software</span><span style="left:46px;top:0;letter-spacing:-0.197px">Restriction</span><span style="left:99px;top:0;letter-spacing:-0.558px">Policies</span></span>
<svg style="left:83px;top:388px;shape-rendering:crispEdges" width="9" height="9" viewBox="0 0 9 9"><rect x="0.5" y="0.5" width="8" height="8" fill="#fff" stroke="#808080"/><path d="M2 4h5v1H2z" fill="#000"/><path d="M4 2h1v5H4z" fill="#000"/></svg>
<svg style="left:98px;top:384px;" width="16" height="16" viewBox="0 0 16 16"><path d="M0.5 13.5V2.5H6l1-1h6.5v12z" fill="url(#fg)" stroke="#d0a858"/>
<path d="M6.5 2.5l1 2h6" fill="none" stroke="#dcbc70"/>
<path d="M1 3.5h5" stroke="#fff8dc"/>
<path d="M8 2.5h3" stroke="#fff"/><path d="M11 2.5h2" stroke="#4a90e0"/>
<path d="M1 13.5h12" stroke="#c09440"/></svg>
<span class="t" style="left:118px;top:384px;"><span style="left:0px;top:0;letter-spacing:-0.057px">Network</span><span style="left:43px;top:0;letter-spacing:-0.494px">Access</span><span style="left:79px;top:0;letter-spacing:-0.059px">Protection</span></span>
<svg style="left:83px;top:404px;shape-rendering:crispEdges" width="9" height="9" viewBox="0 0 9 9"><rect x="0.5" y="0.5" width="8" height="8" fill="#fff" stroke="#808080"/><path d="M2 4h5v1H2z" fill="#000"/><path d="M4 2h1v5H4z" fill="#000"/></svg>
<svg style="left:98px;top:400px;" width="16" height="16" viewBox="0 0 16 16"><path d="M0.5 13.5V2.5H6l1-1h6.5v12z" fill="url(#fg)" stroke="#d0a858"/>
<path d="M6.5 2.5l1 2h6" fill="none" stroke="#dcbc70"/>
<path d="M1 3.5h5" stroke="#fff8dc"/>
<path d="M8 2.5h3" stroke="#fff"/><path d="M11 2.5h2" stroke="#4a90e0"/>
<path d="M1 13.5h12" stroke="#c09440"/></svg>
<span class="t" style="left:118px;top:400px;"><span style="left:0px;top:0;letter-spacing:-0.183px">Application</span><span style="left:55px;top:0;letter-spacing:-0.078px">Control</span><span style="left:93px;top:0;letter-spacing:-0.558px">Policies</span></span>
<svg style="left:83px;top:420px;shape-rendering:crispEdges" width="9" height="9" viewBox="0 0 9 9"><rect x="0.5" y="0.5" width="8" height="8" fill="#fff" stroke="#808080"/><path d="M2 4h5v1H2z" fill="#000"/><path d="M4 2h1v5H4z" fill="#000"/></svg>
<svg style="left:98px;top:416px;" width="16" height="16" viewBox="0 0 16 16"><path d="M3.5 1.5h9l1 1v8h-11v-8z" fill="#d0d0d0" stroke="#202020"/>
<rect x="4" y="3" width="8" height="6" fill="#0808e0"/><path d="M6 5.5h5" stroke="#30b0b0"/><path d="M4 3.5h8" stroke="#4060ff"/>
<path d="M2.5 10.5h12l1 1v2h-14v-2z" fill="#c4c4c4" stroke="#202020"/>
<path d="M14.5 9.5v3" stroke="#202020"/>
<path d="M3.5 7.5L10 14" stroke="#f4e400" stroke-width="2"/>
<circle cx="3" cy="7" r="2.2" fill="#f4e400" stroke="#c8b800" stroke-width="0.6"/><circle cx="3" cy="7" r="0.8" fill="#fff"/></svg>
<span class="t" style="left:118px;top:416px;"><span style="left:0px;top:0;letter-spacing:-0.406px">IP</span><span style="left:13px;top:0;letter-spacing:-0.107px">Security</span><span style="left:55px;top:0;letter-spacing:-0.558px">Policies</span><span style="left:92px;top:0;letter-spacing:-0.250px">on</span><span style="left:107px;top:0;letter-spacing:-0.194px">Active</span><span style="left:139px;top:0;letter-spacing:-0.002px">Directory</span></span>
<svg style="left:83px;top:436px;shape-rendering:crispEdges" width="9" height="9" viewBox="0 0 9 9"><rect x="0.5" y="0.5" width="8" height="8" fill="#fff" stroke="#808080"/><path d="M2 4h5v1H2z" fill="#000"/><path d="M4 2h1v5H4z" fill="#000"/></svg>
<svg style="left:98px;top:432px;" width="16" height="16" viewBox="0 0 16 16"><path d="M0.5 13.5V2.5H6l1-1h6.5v12z" fill="url(#fg)" stroke="#d0a858"/>
<path d="M6.5 2.5l1 2h6" fill="none" stroke="#dcbc70"/>
<path d="M1 3.5h5" stroke="#fff8dc"/>
<path d="M8 2.5h3" stroke="#fff"/><path d="M11 2.5h2" stroke="#4a90e0"/>
<path d="M1 13.5h12" stroke="#c09440"/></svg>
<span class="t" style="left:118px;top:432px;"><span style="left:0px;top:0;letter-spacing:-0.277px">Advanced</span><span style="left:50px;top:0;letter-spacing:-0.020px">Audit</span><span style="left:78px;top:0;letter-spacing:-0.469px">Policy</span><span style="left:108px;top:0;letter-spacing:-0.120px">Configuration</span></span>
<svg style="left:64px;top:452px;shape-rendering:crispEdges" width="9" height="9" viewBox="0 0 9 9"><rect x="0.5" y="0.5" width="8" height="8" fill="#fff" stroke="#808080"/><path d="M2 4h5v1H2z" fill="#000"/></svg>
<svg style="left:79px;top:448px;" width="16" height="16" viewBox="0 0 16 16"><path d="M5 1h2v6H5z" fill="#40c040"/><path d="M8 3h2v4H8z" fill="#e06030"/></svg>
<span class="t" style="left:99px;top:448px;"><span style="left:0px;top:0;letter-spacing:-0.271px">Policy-based</span><span style="left:63px;top:0;letter-spacing:-0.600px">QoS</span></span>
</div>
<div class="clip" style="left:289px;top:77px;width:488px;height:453px;background:#fff">
<div style="left:0px;top:0;width:350px;height:17px;background:#d4d0c8;box-shadow:inset 1px 1px #fff,inset -1px -1px #404040,inset -2px -2px #808080"></div>
<div style="left:350px;top:0;width:200px;height:17px;background:#d4d0c8;box-shadow:inset 1px 1px #fff,inset -1px -1px #404040,inset -2px -2px #808080"></div>
<span class="t" style="left:5px;top:1px;"><span style="left:0px;top:0;letter-spacing:-0.469px">Policy</span></span>
<svg style="left:42px;top:6px;shape-rendering:crispEdges" width="7" height="4" viewBox="0 0 7 4"><path d="M3 0h1v1h1v1h1v1h1v1H0V3h1V2h1V1h1z" fill="#808080"/></svg>
<span class="t" style="left:355px;top:1px;"><span style="left:0px;top:0;letter-spacing:-0.469px">Policy</span><span style="left:30px;top:0;letter-spacing:-0.042px">Setting</span></span>
<svg style="left:6px;top:18px;" width="13" height="14" viewBox="0 0 13 14"><g shape-rendering="crispEdges"><path d="M1 1h10l1 1v10H1z" fill="#ffffff"/><path d="M9 1h1v1h-1zM10 1h1v1h-1zM9 2h1v1h-1zM10 2h1v1h-1zM11 2h1v1h-1zM9 3h1v1h-1zM10 3h1v1h-1zM11 3h1v1h-1z" fill="#f4f4f4"/><path d="M0 0h1v1h-1zM1 0h1v1h-1zM2 0h1v1h-1zM3 0h1v1h-1zM4 0h1v1h-1zM5 0h1v1h-1zM6 0h1v1h-1zM7 0h1v1h-1zM8 0h1v1h-1zM9 0h1v1h-1zM10 0h1v1h-1zM0 0h1v1h-1zM0 1h1v1h-1zM0 2h1v1h-1zM0 3h1v1h-1zM0 4h1v1h-1zM0 5h1v1h-1zM0 6h1v1h-1zM0 7h1v1h-1zM0 8h1v1h-1zM0 9h1v1h-1zM0 10h1v1h-1zM0 11h1v1h-1zM11 1h1v1h-1zM12 2h1v1h-1zM12 3h1v1h-1zM12 4h1v1h-1zM12 5h1v1h-1zM12 6h1v1h-1zM12 7h1v1h-1zM12 8h1v1h-1zM12 9h1v1h-1zM12 10h1v1h-1zM12 11h1v1h-1zM12 12h1v1h-1zM12 13h1v1h-1zM0 11h1v1h-1zM1 11h1v1h-1zM2 11h1v1h-1zM3 12h1v1h-1zM4 12h1v1h-1zM5 12h1v1h-1zM6 12h1v1h-1zM7 12h1v1h-1zM8 12h1v1h-1zM9 12h1v1h-1zM10 13h1v1h-1zM11 13h1v1h-1z" fill="#ababab"/><path d="M9 1h1v1h-1zM9 2h1v1h-1zM9 3h3v1h-3z" fill="#ababab" opacity="0.55"/><path d="M2 2h1v1h-1zM2 3h1v1h-1zM2 4h1v1h-1zM2 5h1v1h-1zM5 2h1v1h-1zM4 3h1v1h-1zM6 3h1v1h-1zM4 4h1v1h-1zM6 4h1v1h-1zM5 5h1v1h-1zM3 7h1v1h-1zM2 8h1v1h-1zM4 8h1v1h-1zM2 9h1v1h-1zM4 9h1v1h-1zM3 10h1v1h-1zM6 7h1v1h-1zM6 8h1v1h-1zM6 9h1v1h-1zM6 10h1v1h-1zM9 7h1v1h-1zM8 8h1v1h-1zM10 8h1v1h-1zM8 9h1v1h-1zM10 9h1v1h-1zM9 10h1v1h-1z" fill="#959cc4"/><path d="M4 2h1v1h-1zM6 2h1v1h-1zM4 5h1v1h-1zM6 5h1v1h-1zM2 7h1v1h-1zM4 7h1v1h-1zM2 10h1v1h-1zM4 10h1v1h-1zM8 7h1v1h-1zM10 7h1v1h-1zM8 10h1v1h-1zM10 10h1v1h-1z" fill="#959cc4" opacity="0.5"/></g></svg>
<span class="t" style="left:21px;top:18px;"><span style="left:0px;top:0;letter-spacing:-0.006px">Create</span><span style="left:36px;top:0;letter-spacing:0.051px">permanent</span><span style="left:92px;top:0;letter-spacing:-0.128px">shared</span><span style="left:128px;top:0;letter-spacing:0.023px">objects</span></span>
<span class="t" style="left:355px;top:18px;"><span style="left:0px;top:0;letter-spacing:-0.062px">Not</span><span style="left:20px;top:0;letter-spacing:-0.320px">Defined</span></span>
<svg style="left:6px;top:35px;" width="13" height="14" viewBox="0 0 13 14"><g shape-rendering="crispEdges"><path d="M1 1h10l1 1v10H1z" fill="#ffffff"/><path d="M9 1h1v1h-1zM10 1h1v1h-1zM9 2h1v1h-1zM10 2h1v1h-1zM11 2h1v1h-1zM9 3h1v1h-1zM10 3h1v1h-1zM11 3h1v1h-1z" fill="#f4f4f4"/><path d="M0 0h1v1h-1zM1 0h1v1h-1zM2 0h1v1h-1zM3 0h1v1h-1zM4 0h1v1h-1zM5 0h1v1h-1zM6 0h1v1h-1zM7 0h1v1h-1zM8 0h1v1h-1zM9 0h1v1h-1zM10 0h1v1h-1zM0 0h1v1h-1zM0 1h1v1h-1zM0 2h1v1h-1zM0 3h1v1h-1zM0 4h1v1h-1zM0 5h1v1h-1zM0 6h1v1h-1zM0 7h1v1h-1zM0 8h1v1h-1zM0 9h1v1h-1zM0 10h1v1h-1zM0 11h1v1h-1zM11 1h1v1h-1zM12 2h1v1h-1zM12 3h1v1h-1zM12 4h1v1h-1zM12 5h1v1h-1zM12 6h1v1h-1zM12 7h1v1h-1zM12 8h1v1h-1zM12 9h1v1h-1zM12 10h1v1h-1zM12 11h1v1h-1zM12 12h1v1h-1zM12 13h1v1h-1zM0 11h1v1h-1zM1 11h1v1h-1zM2 11h1v1h-1zM3 12h1v1h-1zM4 12h1v1h-1zM5 12h1v1h-1zM6 12h1v1h-1zM7 12h1v1h-1zM8 12h1v1h-1zM9 12h1v1h-1zM10 13h1v1h-1zM11 13h1v1h-1z" fill="#ababab"/><path d="M9 1h1v1h-1zM9 2h1v1h-1zM9 3h3v1h-3z" fill="#ababab" opacity="0.55"/><path d="M2 2h1v1h-1zM2 3h1v1h-1zM2 4h1v1h-1zM2 5h1v1h-1zM5 2h1v1h-1zM4 3h1v1h-1zM6 3h1v1h-1zM4 4h1v1h-1zM6 4h1v1h-1zM5 5h1v1h-1zM3 7h1v1h-1zM2 8h1v1h-1zM4 8h1v1h-1zM2 9h1v1h-1zM4 9h1v1h-1zM3 10h1v1h-1zM6 7h1v1h-1zM6 8h1v1h-1zM6 9h1v1h-1zM6 10h1v1h-1zM9 7h1v1h-1zM8 8h1v1h-1zM10 8h1v1h-1zM8 9h1v1h-1zM10 9h1v1h-1zM9 10h1v1h-1z" fill="#959cc4"/><path d="M4 2h1v1h-1zM6 2h1v1h-1zM4 5h1v1h-1zM6 5h1v1h-1zM2 7h1v1h-1zM4 7h1v1h-1zM2 10h1v1h-1zM4 10h1v1h-1zM8 7h1v1h-1zM10 7h1v1h-1zM8 10h1v1h-1zM10 10h1v1h-1z" fill="#959cc4" opacity="0.5"/></g></svg>
<span class="t" style="left:21px;top:35px;"><span style="left:0px;top:0;letter-spacing:-0.006px">Create</span><span style="left:36px;top:0;letter-spacing:-0.257px">symbolic</span><span style="left:80px;top:0;letter-spacing:-0.504px">links</span></span>
<span class="t" style="left:355px;top:35px;"><span style="left:0px;top:0;letter-spacing:-0.062px">Not</span><span style="left:20px;top:0;letter-spacing:-0.320px">Defined</span></span>
<svg style="left:6px;top:52px;" width="13" height="14" viewBox="0 0 13 14"><g shape-rendering="crispEdges"><path d="M1 1h10l1 1v10H1z" fill="#ffffff"/><path d="M9 1h1v1h-1zM10 1h1v1h-1zM9 2h1v1h-1zM10 2h1v1h-1zM11 2h1v1h-1zM9 3h1v1h-1zM10 3h1v1h-1zM11 3h1v1h-1z" fill="#f4f4f4"/><path d="M0 0h1v1h-1zM1 0h1v1h-1zM2 0h1v1h-1zM3 0h1v1h-1zM4 0h1v1h-1zM5 0h1v1h-1zM6 0h1v1h-1zM7 0h1v1h-1zM8 0h1v1h-1zM9 0h1v1h-1zM10 0h1v1h-1zM0 0h1v1h-1zM0 1h1v1h-1zM0 2h1v1h-1zM0 3h1v1h-1zM0 4h1v1h-1zM0 5h1v1h-1zM0 6h1v1h-1zM0 7h1v1h-1zM0 8h1v1h-1zM0 9h1v1h-1zM0 10h1v1h-1zM0 11h1v1h-1zM11 1h1v1h-1zM12 2h1v1h-1zM12 3h1v1h-1zM12 4h1v1h-1zM12 5h1v1h-1zM12 6h1v1h-1zM12 7h1v1h-1zM12 8h1v1h-1zM12 9h1v1h-1zM12 10h1v1h-1zM12 11h1v1h-1zM12 12h1v1h-1zM12 13h1v1h-1zM0 11h1v1h-1zM1 11h1v1h-1zM2 11h1v1h-1zM3 12h1v1h-1zM4 12h1v1h-1zM5 12h1v1h-1zM6 12h1v1h-1zM7 12h1v1h-1zM8 12h1v1h-1zM9 12h1v1h-1zM10 13h1v1h-1zM11 13h1v1h-1z" fill="#ababab"/><path d="M9 1h1v1h-1zM9 2h1v1h-1zM9 3h3v1h-3z" fill="#ababab" opacity="0.55"/><path d="M2 2h1v1h-1zM2 3h1v1h-1zM2 4h1v1h-1zM2 5h1v1h-1zM5 2h1v1h-1zM4 3h1v1h-1zM6 3h1v1h-1zM4 4h1v1h-1zM6 4h1v1h-1zM5 5h1v1h-1zM3 7h1v1h-1zM2 8h1v1h-1zM4 8h1v1h-1zM2 9h1v1h-1zM4 9h1v1h-1zM3 10h1v1h-1zM6 7h1v1h-1zM6 8h1v1h-1zM6 9h1v1h-1zM6 10h1v1h-1zM9 7h1v1h-1zM8 8h1v1h-1zM10 8h1v1h-1zM8 9h1v1h-1zM10 9h1v1h-1zM9 10h1v1h-1z" fill="#959cc4"/><path d="M4 2h1v1h-1zM6 2h1v1h-1zM4 5h1v1h-1zM6 5h1v1h-1zM2 7h1v1h-1zM4 7h1v1h-1zM2 10h1v1h-1zM4 10h1v1h-1zM8 7h1v1h-1zM10 7h1v1h-1zM8 10h1v1h-1zM10 10h1v1h-1z" fill="#959cc4" opacity="0.5"/></g></svg>
<span class="t" style="left:21px;top:52px;"><span style="left:0px;top:0;letter-spacing:-0.355px">Debug</span><span style="left:34px;top:0;letter-spacing:-0.067px">programs</span></span>
<span class="t" style="left:355px;top:52px;"><span style="left:0px;top:0;letter-spacing:-0.062px">Not</span><span style="left:20px;top:0;letter-spacing:-0.320px">Defined</span></span>
<svg style="left:6px;top:69px;" width="13" height="14" viewBox="0 0 13 14"><g shape-rendering="crispEdges"><path d="M1 1h10l1 1v10H1z" fill="#ffffff"/><path d="M9 1h1v1h-1zM10 1h1v1h-1zM9 2h1v1h-1zM10 2h1v1h-1zM11 2h1v1h-1zM9 3h1v1h-1zM10 3h1v1h-1zM11 3h1v1h-1z" fill="#f4f4f4"/><path d="M0 0h1v1h-1zM1 0h1v1h-1zM2 0h1v1h-1zM3 0h1v1h-1zM4 0h1v1h-1zM5 0h1v1h-1zM6 0h1v1h-1zM7 0h1v1h-1zM8 0h1v1h-1zM9 0h1v1h-1zM10 0h1v1h-1zM0 0h1v1h-1zM0 1h1v1h-1zM0 2h1v1h-1zM0 3h1v1h-1zM0 4h1v1h-1zM0 5h1v1h-1zM0 6h1v1h-1zM0 7h1v1h-1zM0 8h1v1h-1zM0 9h1v1h-1zM0 10h1v1h-1zM0 11h1v1h-1zM11 1h1v1h-1zM12 2h1v1h-1zM12 3h1v1h-1zM12 4h1v1h-1zM12 5h1v1h-1zM12 6h1v1h-1zM12 7h1v1h-1zM12 8h1v1h-1zM12 9h1v1h-1zM12 10h1v1h-1zM12 11h1v1h-1zM12 12h1v1h-1zM12 13h1v1h-1zM0 11h1v1h-1zM1 11h1v1h-1zM2 11h1v1h-1zM3 12h1v1h-1zM4 12h1v1h-1zM5 12h1v1h-1zM6 12h1v1h-1zM7 12h1v1h-1zM8 12h1v1h-1zM9 12h1v1h-1zM10 13h1v1h-1zM11 13h1v1h-1z" fill="#ababab"/><path d="M9 1h1v1h-1zM9 2h1v1h-1zM9 3h3v1h-3z" fill="#ababab" opacity="0.55"/><path d="M2 2h1v1h-1zM2 3h1v1h-1zM2 4h1v1h-1zM2 5h1v1h-1zM5 2h1v1h-1zM4 3h1v1h-1zM6 3h1v1h-1zM4 4h1v1h-1zM6 4h1v1h-1zM5 5h1v1h-1zM3 7h1v1h-1zM2 8h1v1h-1zM4 8h1v1h-1zM2 9h1v1h-1zM4 9h1v1h-1zM3 10h1v1h-1zM6 7h1v1h-1zM6 8h1v1h-1zM6 9h1v1h-1zM6 10h1v1h-1zM9 7h1v1h-1zM8 8h1v1h-1zM10 8h1v1h-1zM8 9h1v1h-1zM10 9h1v1h-1zM9 10h1v1h-1z" fill="#959cc4"/><path d="M4 2h1v1h-1zM6 2h1v1h-1zM4 5h1v1h-1zM6 5h1v1h-1zM2 7h1v1h-1zM4 7h1v1h-1zM2 10h1v1h-1zM4 10h1v1h-1zM8 7h1v1h-1zM10 7h1v1h-1zM8 10h1v1h-1zM10 10h1v1h-1z" fill="#959cc4" opacity="0.5"/></g></svg>
<span class="t" style="left:21px;top:69px;"><span style="left:0px;top:0;letter-spacing:-0.229px">Deny</span><span style="left:28px;top:0;letter-spacing:-0.450px">access</span><span style="left:63px;top:0;letter-spacing:0.600px">to</span><span style="left:76px;top:0;letter-spacing:-0.042px">this</span><span style="left:96px;top:0;letter-spacing:0.020px">computer</span><span style="left:145px;top:0;letter-spacing:0.000px">from</span><span style="left:170px;top:0;letter-spacing:0.352px">the</span><span style="left:189px;top:0;letter-spacing:0.078px">network</span></span>
<span class="t" style="left:355px;top:69px;"><span style="left:0px;top:0;letter-spacing:-0.062px">Not</span><span style="left:20px;top:0;letter-spacing:-0.320px">Defined</span></span>
<div style="left:20px;top:85px;width:468px;height:17px;background:#d4d0c8"></div>
<div style="left:20px;top:86px;width:133px;height:16px;background:#d6d17c"></div>
<div style="left:20px;top:102px;width:133px;height:1px;background:#fffe8a"></div>
<svg style="left:6px;top:86px;" width="13" height="14" viewBox="0 0 13 14"><g shape-rendering="crispEdges"><path d="M1 1h10l1 1v10H1z" fill="#cfd0ec"/><path d="M9 1h1v1h-1zM10 1h1v1h-1zM9 2h1v1h-1zM10 2h1v1h-1zM11 2h1v1h-1zM9 3h1v1h-1zM10 3h1v1h-1zM11 3h1v1h-1z" fill="#e8e8f4"/><path d="M0 0h1v1h-1zM1 0h1v1h-1zM2 0h1v1h-1zM3 0h1v1h-1zM4 0h1v1h-1zM5 0h1v1h-1zM6 0h1v1h-1zM7 0h1v1h-1zM8 0h1v1h-1zM9 0h1v1h-1zM10 0h1v1h-1zM0 0h1v1h-1zM0 1h1v1h-1zM0 2h1v1h-1zM0 3h1v1h-1zM0 4h1v1h-1zM0 5h1v1h-1zM0 6h1v1h-1zM0 7h1v1h-1zM0 8h1v1h-1zM0 9h1v1h-1zM0 10h1v1h-1zM0 11h1v1h-1zM11 1h1v1h-1zM12 2h1v1h-1zM12 3h1v1h-1zM12 4h1v1h-1zM12 5h1v1h-1zM12 6h1v1h-1zM12 7h1v1h-1zM12 8h1v1h-1zM12 9h1v1h-1zM12 10h1v1h-1zM12 11h1v1h-1zM12 12h1v1h-1zM12 13h1v1h-1zM0 11h1v1h-1zM1 11h1v1h-1zM2 11h1v1h-1zM3 12h1v1h-1zM4 12h1v1h-1zM5 12h1v1h-1zM6 12h1v1h-1zM7 12h1v1h-1zM8 12h1v1h-1zM9 12h1v1h-1zM10 13h1v1h-1zM11 13h1v1h-1z" fill="#7880a0"/><path d="M9 1h1v1h-1zM9 2h1v1h-1zM9 3h3v1h-3z" fill="#7880a0" opacity="0.55"/><path d="M2 2h1v1h-1zM2 3h1v1h-1zM2 4h1v1h-1zM2 5h1v1h-1zM5 2h1v1h-1zM4 3h1v1h-1zM6 3h1v1h-1zM4 4h1v1h-1zM6 4h1v1h-1zM5 5h1v1h-1zM3 7h1v1h-1zM2 8h1v1h-1zM4 8h1v1h-1zM2 9h1v1h-1zM4 9h1v1h-1zM3 10h1v1h-1zM6 7h1v1h-1zM6 8h1v1h-1zM6 9h1v1h-1zM6 10h1v1h-1zM9 7h1v1h-1zM8 8h1v1h-1zM10 8h1v1h-1zM8 9h1v1h-1zM10 9h1v1h-1zM9 10h1v1h-1z" fill="#5868a8"/><path d="M4 2h1v1h-1zM6 2h1v1h-1zM4 5h1v1h-1zM6 5h1v1h-1zM2 7h1v1h-1zM4 7h1v1h-1zM2 10h1v1h-1zM4 10h1v1h-1zM8 7h1v1h-1zM10 7h1v1h-1zM8 10h1v1h-1zM10 10h1v1h-1z" fill="#5868a8" opacity="0.5"/></g></svg>
<span class="t" style="left:21px;top:86px;"><span style="left:0px;top:0;letter-spacing:-0.229px">Deny</span><span style="left:28px;top:0;letter-spacing:-0.344px">log</span><span style="left:45px;top:0;letter-spacing:-0.250px">on</span><span style="left:60px;top:0;letter-spacing:-0.600px">as</span><span style="left:74px;top:0;letter-spacing:-0.125px">a</span><span style="left:83px;top:0;letter-spacing:0.020px">batch</span><span style="left:113px;top:0;letter-spacing:0.156px">job</span></span>
<span class="t" style="left:355px;top:86px;"><span style="left:0px;top:0;letter-spacing:-0.062px">Not</span><span style="left:20px;top:0;letter-spacing:-0.320px">Defined</span></span>
<svg style="left:6px;top:103px;" width="13" height="14" viewBox="0 0 13 14"><g shape-rendering="crispEdges"><path d="M1 1h10l1 1v10H1z" fill="#ffffff"/><path d="M9 1h1v1h-1zM10 1h1v1h-1zM9 2h1v1h-1zM10 2h1v1h-1zM11 2h1v1h-1zM9 3h1v1h-1zM10 3h1v1h-1zM11 3h1v1h-1z" fill="#f4f4f4"/><path d="M0 0h1v1h-1zM1 0h1v1h-1zM2 0h1v1h-1zM3 0h1v1h-1zM4 0h1v1h-1zM5 0h1v1h-1zM6 0h1v1h-1zM7 0h1v1h-1zM8 0h1v1h-1zM9 0h1v1h-1zM10 0h1v1h-1zM0 0h1v1h-1zM0 1h1v1h-1zM0 2h1v1h-1zM0 3h1v1h-1zM0 4h1v1h-1zM0 5h1v1h-1zM0 6h1v1h-1zM0 7h1v1h-1zM0 8h1v1h-1zM0 9h1v1h-1zM0 10h1v1h-1zM0 11h1v1h-1zM11 1h1v1h-1zM12 2h1v1h-1zM12 3h1v1h-1zM12 4h1v1h-1zM12 5h1v1h-1zM12 6h1v1h-1zM12 7h1v1h-1zM12 8h1v1h-1zM12 9h1v1h-1zM12 10h1v1h-1zM12 11h1v1h-1zM12 12h1v1h-1zM12 13h1v1h-1zM0 11h1v1h-1zM1 11h1v1h-1zM2 11h1v1h-1zM3 12h1v1h-1zM4 12h1v1h-1zM5 12h1v1h-1zM6 12h1v1h-1zM7 12h1v1h-1zM8 12h1v1h-1zM9 12h1v1h-1zM10 13h1v1h-1zM11 13h1v1h-1z" fill="#ababab"/><path d="M9 1h1v1h-1zM9 2h1v1h-1zM9 3h3v1h-3z" fill="#ababab" opacity="0.55"/><path d="M2 2h1v1h-1zM2 3h1v1h-1zM2 4h1v1h-1zM2 5h1v1h-1zM5 2h1v1h-1zM4 3h1v1h-1zM6 3h1v1h-1zM4 4h1v1h-1zM6 4h1v1h-1zM5 5h1v1h-1zM3 7h1v1h-1zM2 8h1v1h-1zM4 8h1v1h-1zM2 9h1v1h-1zM4 9h1v1h-1zM3 10h1v1h-1zM6 7h1v1h-1zM6 8h1v1h-1zM6 9h1v1h-1zM6 10h1v1h-1zM9 7h1v1h-1zM8 8h1v1h-1zM10 8h1v1h-1zM8 9h1v1h-1zM10 9h1v1h-1zM9 10h1v1h-1z" fill="#959cc4"/><path d="M4 2h1v1h-1zM6 2h1v1h-1zM4 5h1v1h-1zM6 5h1v1h-1zM2 7h1v1h-1zM4 7h1v1h-1zM2 10h1v1h-1zM4 10h1v1h-1zM8 7h1v1h-1zM10 7h1v1h-1zM8 10h1v1h-1zM10 10h1v1h-1z" fill="#959cc4" opacity="0.5"/></g></svg>
<span class="t" style="left:21px;top:103px;"><span style="left:0px;top:0;letter-spacing:-0.229px">Deny</span><span style="left:28px;top:0;letter-spacing:-0.344px">log</span><span style="left:45px;top:0;letter-spacing:-0.250px">on</span><span style="left:60px;top:0;letter-spacing:-0.600px">as</span><span style="left:74px;top:0;letter-spacing:-0.125px">a</span><span style="left:83px;top:0;letter-spacing:-0.307px">service</span></span>
<span class="t" style="left:355px;top:103px;"><span style="left:0px;top:0;letter-spacing:-0.062px">Not</span><span style="left:20px;top:0;letter-spacing:-0.320px">Defined</span></span>
<div style="left:20px;top:119px;width:228px;height:17px;background:#fffe8a"></div>
<svg style="left:6px;top:120px;" width="13" height="14" viewBox="0 0 13 14"><g shape-rendering="crispEdges"><path d="M1 1h10l1 1v10H1z" fill="#ffffff"/><path d="M9 1h1v1h-1zM10 1h1v1h-1zM9 2h1v1h-1zM10 2h1v1h-1zM11 2h1v1h-1zM9 3h1v1h-1zM10 3h1v1h-1zM11 3h1v1h-1z" fill="#f4f4f4"/><path d="M0 0h1v1h-1zM1 0h1v1h-1zM2 0h1v1h-1zM3 0h1v1h-1zM4 0h1v1h-1zM5 0h1v1h-1zM6 0h1v1h-1zM7 0h1v1h-1zM8 0h1v1h-1zM9 0h1v1h-1zM10 0h1v1h-1zM0 0h1v1h-1zM0 1h1v1h-1zM0 2h1v1h-1zM0 3h1v1h-1zM0 4h1v1h-1zM0 5h1v1h-1zM0 6h1v1h-1zM0 7h1v1h-1zM0 8h1v1h-1zM0 9h1v1h-1zM0 10h1v1h-1zM0 11h1v1h-1zM11 1h1v1h-1zM12 2h1v1h-1zM12 3h1v1h-1zM12 4h1v1h-1zM12 5h1v1h-1zM12 6h1v1h-1zM12 7h1v1h-1zM12 8h1v1h-1zM12 9h1v1h-1zM12 10h1v1h-1zM12 11h1v1h-1zM12 12h1v1h-1zM12 13h1v1h-1zM0 11h1v1h-1zM1 11h1v1h-1zM2 11h1v1h-1zM3 12h1v1h-1zM4 12h1v1h-1zM5 12h1v1h-1zM6 12h1v1h-1zM7 12h1v1h-1zM8 12h1v1h-1zM9 12h1v1h-1zM10 13h1v1h-1zM11 13h1v1h-1z" fill="#ababab"/><path d="M9 1h1v1h-1zM9 2h1v1h-1zM9 3h3v1h-3z" fill="#ababab" opacity="0.55"/><path d="M2 2h1v1h-1zM2 3h1v1h-1zM2 4h1v1h-1zM2 5h1v1h-1zM5 2h1v1h-1zM4 3h1v1h-1zM6 3h1v1h-1zM4 4h1v1h-1zM6 4h1v1h-1zM5 5h1v1h-1zM3 7h1v1h-1zM2 8h1v1h-1zM4 8h1v1h-1zM2 9h1v1h-1zM4 9h1v1h-1zM3 10h1v1h-1zM6 7h1v1h-1zM6 8h1v1h-1zM6 9h1v1h-1zM6 10h1v1h-1zM9 7h1v1h-1zM8 8h1v1h-1zM10 8h1v1h-1zM8 9h1v1h-1zM10 9h1v1h-1zM9 10h1v1h-1z" fill="#959cc4"/><path d="M4 2h1v1h-1zM6 2h1v1h-1zM4 5h1v1h-1zM6 5h1v1h-1zM2 7h1v1h-1zM4 7h1v1h-1zM2 10h1v1h-1zM4 10h1v1h-1zM8 7h1v1h-1zM10 7h1v1h-1zM8 10h1v1h-1zM10 10h1v1h-1z" fill="#959cc4" opacity="0.5"/></g></svg>
<span class="t" style="left:21px;top:120px;"><span style="left:0px;top:0;letter-spacing:-0.229px">Deny</span><span style="left:28px;top:0;letter-spacing:-0.344px">log</span><span style="left:45px;top:0;letter-spacing:-0.250px">on</span><span style="left:60px;top:0;letter-spacing:-0.263px">locally</span></span>
<span class="t" style="left:355px;top:120px;"><span style="left:0px;top:0;letter-spacing:-0.062px">Not</span><span style="left:20px;top:0;letter-spacing:-0.320px">Defined</span></span>
<div style="left:20px;top:136px;width:228px;height:17px;background:#fffe8a"></div>
<svg style="left:6px;top:137px;" width="13" height="14" viewBox="0 0 13 14"><g shape-rendering="crispEdges"><path d="M1 1h10l1 1v10H1z" fill="#ffffff"/><path d="M9 1h1v1h-1zM10 1h1v1h-1zM9 2h1v1h-1zM10 2h1v1h-1zM11 2h1v1h-1zM9 3h1v1h-1zM10 3h1v1h-1zM11 3h1v1h-1z" fill="#f4f4f4"/><path d="M0 0h1v1h-1zM1 0h1v1h-1zM2 0h1v1h-1zM3 0h1v1h-1zM4 0h1v1h-1zM5 0h1v1h-1zM6 0h1v1h-1zM7 0h1v1h-1zM8 0h1v1h-1zM9 0h1v1h-1zM10 0h1v1h-1zM0 0h1v1h-1zM0 1h1v1h-1zM0 2h1v1h-1zM0 3h1v1h-1zM0 4h1v1h-1zM0 5h1v1h-1zM0 6h1v1h-1zM0 7h1v1h-1zM0 8h1v1h-1zM0 9h1v1h-1zM0 10h1v1h-1zM0 11h1v1h-1zM11 1h1v1h-1zM12 2h1v1h-1zM12 3h1v1h-1zM12 4h1v1h-1zM12 5h1v1h-1zM12 6h1v1h-1zM12 7h1v1h-1zM12 8h1v1h-1zM12 9h1v1h-1zM12 10h1v1h-1zM12 11h1v1h-1zM12 12h1v1h-1zM12 13h1v1h-1zM0 11h1v1h-1zM1 11h1v1h-1zM2 11h1v1h-1zM3 12h1v1h-1zM4 12h1v1h-1zM5 12h1v1h-1zM6 12h1v1h-1zM7 12h1v1h-1zM8 12h1v1h-1zM9 12h1v1h-1zM10 13h1v1h-1zM11 13h1v1h-1z" fill="#ababab"/><path d="M9 1h1v1h-1zM9 2h1v1h-1zM9 3h3v1h-3z" fill="#ababab" opacity="0.55"/><path d="M2 2h1v1h-1zM2 3h1v1h-1zM2 4h1v1h-1zM2 5h1v1h-1zM5 2h1v1h-1zM4 3h1v1h-1zM6 3h1v1h-1zM4 4h1v1h-1zM6 4h1v1h-1zM5 5h1v1h-1zM3 7h1v1h-1zM2 8h1v1h-1zM4 8h1v1h-1zM2 9h1v1h-1zM4 9h1v1h-1zM3 10h1v1h-1zM6 7h1v1h-1zM6 8h1v1h-1zM6 9h1v1h-1zM6 10h1v1h-1zM9 7h1v1h-1zM8 8h1v1h-1zM10 8h1v1h-1zM8 9h1v1h-1zM10 9h1v1h-1zM9 10h1v1h-1z" fill="#959cc4"/><path d="M4 2h1v1h-1zM6 2h1v1h-1zM4 5h1v1h-1zM6 5h1v1h-1zM2 7h1v1h-1zM4 7h1v1h-1zM2 10h1v1h-1zM4 10h1v1h-1zM8 7h1v1h-1zM10 7h1v1h-1zM8 10h1v1h-1zM10 10h1v1h-1z" fill="#959cc4" opacity="0.5"/></g></svg>
<span class="t" style="left:21px;top:137px;"><span style="left:0px;top:0;letter-spacing:-0.229px">Deny</span><span style="left:28px;top:0;letter-spacing:-0.344px">log</span><span style="left:45px;top:0;letter-spacing:-0.250px">on</span><span style="left:60px;top:0;letter-spacing:0.115px">through</span><span style="left:101px;top:0;letter-spacing:-0.306px">Remote</span><span style="left:141px;top:0;letter-spacing:-0.227px">Desktop</span><span style="left:183px;top:0;letter-spacing:-0.455px">Services</span></span>
<span class="t" style="left:355px;top:137px;"><span style="left:0px;top:0;letter-spacing:-0.062px">Not</span><span style="left:20px;top:0;letter-spacing:-0.320px">Defined</span></span>
<svg style="left:6px;top:154px;" width="13" height="14" viewBox="0 0 13 14"><g shape-rendering="crispEdges"><path d="M1 1h10l1 1v10H1z" fill="#ffffff"/><path d="M9 1h1v1h-1zM10 1h1v1h-1zM9 2h1v1h-1zM10 2h1v1h-1zM11 2h1v1h-1zM9 3h1v1h-1zM10 3h1v1h-1zM11 3h1v1h-1z" fill="#f4f4f4"/><path d="M0 0h1v1h-1zM1 0h1v1h-1zM2 0h1v1h-1zM3 0h1v1h-1zM4 0h1v1h-1zM5 0h1v1h-1zM6 0h1v1h-1zM7 0h1v1h-1zM8 0h1v1h-1zM9 0h1v1h-1zM10 0h1v1h-1zM0 0h1v1h-1zM0 1h1v1h-1zM0 2h1v1h-1zM0 3h1v1h-1zM0 4h1v1h-1zM0 5h1v1h-1zM0 6h1v1h-1zM0 7h1v1h-1zM0 8h1v1h-1zM0 9h1v1h-1zM0 10h1v1h-1zM0 11h1v1h-1zM11 1h1v1h-1zM12 2h1v1h-1zM12 3h1v1h-1zM12 4h1v1h-1zM12 5h1v1h-1zM12 6h1v1h-1zM12 7h1v1h-1zM12 8h1v1h-1zM12 9h1v1h-1zM12 10h1v1h-1zM12 11h1v1h-1zM12 12h1v1h-1zM12 13h1v1h-1zM0 11h1v1h-1zM1 11h1v1h-1zM2 11h1v1h-1zM3 12h1v1h-1zM4 12h1v1h-1zM5 12h1v1h-1zM6 12h1v1h-1zM7 12h1v1h-1zM8 12h1v1h-1zM9 12h1v1h-1zM10 13h1v1h-1zM11 13h1v1h-1z" fill="#ababab"/><path d="M9 1h1v1h-1zM9 2h1v1h-1zM9 3h3v1h-3z" fill="#ababab" opacity="0.55"/><path d="M2 2h1v1h-1zM2 3h1v1h-1zM2 4h1v1h-1zM2 5h1v1h-1zM5 2h1v1h-1zM4 3h1v1h-1zM6 3h1v1h-1zM4 4h1v1h-1zM6 4h1v1h-1zM5 5h1v1h-1zM3 7h1v1h-1zM2 8h1v1h-1zM4 8h1v1h-1zM2 9h1v1h-1zM4 9h1v1h-1zM3 10h1v1h-1zM6 7h1v1h-1zM6 8h1v1h-1zM6 9h1v1h-1zM6 10h1v1h-1zM9 7h1v1h-1zM8 8h1v1h-1zM10 8h1v1h-1zM8 9h1v1h-1zM10 9h1v1h-1zM9 10h1v1h-1z" fill="#959cc4"/><path d="M4 2h1v1h-1zM6 2h1v1h-1zM4 5h1v1h-1zM6 5h1v1h-1zM2 7h1v1h-1zM4 7h1v1h-1zM2 10h1v1h-1zM4 10h1v1h-1zM8 7h1v1h-1zM10 7h1v1h-1zM8 10h1v1h-1zM10 10h1v1h-1z" fill="#959cc4" opacity="0.5"/></g></svg>
<span class="t" style="left:21px;top:154px;"><span style="left:0px;top:0;letter-spacing:-0.453px">Enable</span><span style="left:35px;top:0;letter-spacing:0.020px">computer</span><span style="left:84px;top:0;letter-spacing:-0.180px">and</span><span style="left:105px;top:0;letter-spacing:-0.135px">user</span><span style="left:129px;top:0;letter-spacing:-0.147px">accounts</span><span style="left:175px;top:0;letter-spacing:0.600px">to</span><span style="left:188px;top:0;letter-spacing:-0.250px">be</span><span style="left:203px;top:0;letter-spacing:0.227px">trusted</span><span style="left:241px;top:0;letter-spacing:0.078px">for</span><span style="left:257px;top:0;letter-spacing:-0.087px">delegation</span></span>
<span class="t" style="left:355px;top:154px;"><span style="left:0px;top:0;letter-spacing:-0.062px">Not</span><span style="left:20px;top:0;letter-spacing:-0.320px">Defined</span></span>
<svg style="left:6px;top:171px;" width="13" height="14" viewBox="0 0 13 14"><g shape-rendering="crispEdges"><path d="M1 1h10l1 1v10H1z" fill="#ffffff"/><path d="M9 1h1v1h-1zM10 1h1v1h-1zM9 2h1v1h-1zM10 2h1v1h-1zM11 2h1v1h-1zM9 3h1v1h-1zM10 3h1v1h-1zM11 3h1v1h-1z" fill="#f4f4f4"/><path d="M0 0h1v1h-1zM1 0h1v1h-1zM2 0h1v1h-1zM3 0h1v1h-1zM4 0h1v1h-1zM5 0h1v1h-1zM6 0h1v1h-1zM7 0h1v1h-1zM8 0h1v1h-1zM9 0h1v1h-1zM10 0h1v1h-1zM0 0h1v1h-1zM0 1h1v1h-1zM0 2h1v1h-1zM0 3h1v1h-1zM0 4h1v1h-1zM0 5h1v1h-1zM0 6h1v1h-1zM0 7h1v1h-1zM0 8h1v1h-1zM0 9h1v1h-1zM0 10h1v1h-1zM0 11h1v1h-1zM11 1h1v1h-1zM12 2h1v1h-1zM12 3h1v1h-1zM12 4h1v1h-1zM12 5h1v1h-1zM12 6h1v1h-1zM12 7h1v1h-1zM12 8h1v1h-1zM12 9h1v1h-1zM12 10h1v1h-1zM12 11h1v1h-1zM12 12h1v1h-1zM12 13h1v1h-1zM0 11h1v1h-1zM1 11h1v1h-1zM2 11h1v1h-1zM3 12h1v1h-1zM4 12h1v1h-1zM5 12h1v1h-1zM6 12h1v1h-1zM7 12h1v1h-1zM8 12h1v1h-1zM9 12h1v1h-1zM10 13h1v1h-1zM11 13h1v1h-1z" fill="#ababab"/><path d="M9 1h1v1h-1zM9 2h1v1h-1zM9 3h3v1h-3z" fill="#ababab" opacity="0.55"/><path d="M2 2h1v1h-1zM2 3h1v1h-1zM2 4h1v1h-1zM2 5h1v1h-1zM5 2h1v1h-1zM4 3h1v1h-1zM6 3h1v1h-1zM4 4h1v1h-1zM6 4h1v1h-1zM5 5h1v1h-1zM3 7h1v1h-1zM2 8h1v1h-1zM4 8h1v1h-1zM2 9h1v1h-1zM4 9h1v1h-1zM3 10h1v1h-1zM6 7h1v1h-1zM6 8h1v1h-1zM6 9h1v1h-1zM6 10h1v1h-1zM9 7h1v1h-1zM8 8h1v1h-1zM10 8h1v1h-1zM8 9h1v1h-1zM10 9h1v1h-1zM9 10h1v1h-1z" fill="#959cc4"/><path d="M4 2h1v1h-1zM6 2h1v1h-1zM4 5h1v1h-1zM6 5h1v1h-1zM2 7h1v1h-1zM4 7h1v1h-1zM2 10h1v1h-1zM4 10h1v1h-1zM8 7h1v1h-1zM10 7h1v1h-1zM8 10h1v1h-1zM10 10h1v1h-1z" fill="#959cc4" opacity="0.5"/></g></svg>
<span class="t" style="left:21px;top:171px;"><span style="left:0px;top:0;letter-spacing:-0.531px">Force</span><span style="left:29px;top:0;letter-spacing:-0.013px">shutdown</span><span style="left:79px;top:0;letter-spacing:0.000px">from</span><span style="left:104px;top:0;letter-spacing:-0.125px">a</span><span style="left:113px;top:0;letter-spacing:0.150px">remote</span><span style="left:151px;top:0;letter-spacing:0.031px">system</span></span>
<span class="t" style="left:355px;top:171px;"><span style="left:0px;top:0;letter-spacing:-0.062px">Not</span><span style="left:20px;top:0;letter-spacing:-0.320px">Defined</span></span>
<svg style="left:6px;top:188px;" width="13" height="14" viewBox="0 0 13 14"><g shape-rendering="crispEdges"><path d="M1 1h10l1 1v10H1z" fill="#ffffff"/><path d="M9 1h1v1h-1zM10 1h1v1h-1zM9 2h1v1h-1zM10 2h1v1h-1zM11 2h1v1h-1zM9 3h1v1h-1zM10 3h1v1h-1zM11 3h1v1h-1z" fill="#f4f4f4"/><path d="M0 0h1v1h-1zM1 0h1v1h-1zM2 0h1v1h-1zM3 0h1v1h-1zM4 0h1v1h-1zM5 0h1v1h-1zM6 0h1v1h-1zM7 0h1v1h-1zM8 0h1v1h-1zM9 0h1v1h-1zM10 0h1v1h-1zM0 0h1v1h-1zM0 1h1v1h-1zM0 2h1v1h-1zM0 3h1v1h-1zM0 4h1v1h-1zM0 5h1v1h-1zM0 6h1v1h-1zM0 7h1v1h-1zM0 8h1v1h-1zM0 9h1v1h-1zM0 10h1v1h-1zM0 11h1v1h-1zM11 1h1v1h-1zM12 2h1v1h-1zM12 3h1v1h-1zM12 4h1v1h-1zM12 5h1v1h-1zM12 6h1v1h-1zM12 7h1v1h-1zM12 8h1v1h-1zM12 9h1v1h-1zM12 10h1v1h-1zM12 11h1v1h-1zM12 12h1v1h-1zM12 13h1v1h-1zM0 11h1v1h-1zM1 11h1v1h-1zM2 11h1v1h-1zM3 12h1v1h-1zM4 12h1v1h-1zM5 12h1v1h-1zM6 12h1v1h-1zM7 12h1v1h-1zM8 12h1v1h-1zM9 12h1v1h-1zM10 13h1v1h-1zM11 13h1v1h-1z" fill="#ababab"/><path d="M9 1h1v1h-1zM9 2h1v1h-1zM9 3h3v1h-3z" fill="#ababab" opacity="0.55"/><path d="M2 2h1v1h-1zM2 3h1v1h-1zM2 4h1v1h-1zM2 5h1v1h-1zM5 2h1v1h-1zM4 3h1v1h-1zM6 3h1v1h-1zM4 4h1v1h-1zM6 4h1v1h-1zM5 5h1v1h-1zM3 7h1v1h-1zM2 8h1v1h-1zM4 8h1v1h-1zM2 9h1v1h-1zM4 9h1v1h-1zM3 10h1v1h-1zM6 7h1v1h-1zM6 8h1v1h-1zM6 9h1v1h-1zM6 10h1v1h-1zM9 7h1v1h-1zM8 8h1v1h-1zM10 8h1v1h-1zM8 9h1v1h-1zM10 9h1v1h-1zM9 10h1v1h-1z" fill="#959cc4"/><path d="M4 2h1v1h-1zM6 2h1v1h-1zM4 5h1v1h-1zM6 5h1v1h-1zM2 7h1v1h-1zM4 7h1v1h-1zM2 10h1v1h-1zM4 10h1v1h-1zM8 7h1v1h-1zM10 7h1v1h-1zM8 10h1v1h-1zM10 10h1v1h-1z" fill="#959cc4" opacity="0.5"/></g></svg>
<span class="t" style="left:21px;top:188px;"><span style="left:0px;top:0;letter-spacing:-0.125px">Generate</span><span style="left:48px;top:0;letter-spacing:0.013px">security</span><span style="left:89px;top:0;letter-spacing:-0.072px">audits</span></span>
<span class="t" style="left:355px;top:188px;"><span style="left:0px;top:0;letter-spacing:-0.062px">Not</span><span style="left:20px;top:0;letter-spacing:-0.320px">Defined</span></span>
<svg style="left:6px;top:205px;" width="13" height="14" viewBox="0 0 13 14"><g shape-rendering="crispEdges"><path d="M1 1h10l1 1v10H1z" fill="#ffffff"/><path d="M9 1h1v1h-1zM10 1h1v1h-1zM9 2h1v1h-1zM10 2h1v1h-1zM11 2h1v1h-1zM9 3h1v1h-1zM10 3h1v1h-1zM11 3h1v1h-1z" fill="#f4f4f4"/><path d="M0 0h1v1h-1zM1 0h1v1h-1zM2 0h1v1h-1zM3 0h1v1h-1zM4 0h1v1h-1zM5 0h1v1h-1zM6 0h1v1h-1zM7 0h1v1h-1zM8 0h1v1h-1zM9 0h1v1h-1zM10 0h1v1h-1zM0 0h1v1h-1zM0 1h1v1h-1zM0 2h1v1h-1zM0 3h1v1h-1zM0 4h1v1h-1zM0 5h1v1h-1zM0 6h1v1h-1zM0 7h1v1h-1zM0 8h1v1h-1zM0 9h1v1h-1zM0 10h1v1h-1zM0 11h1v1h-1zM11 1h1v1h-1zM12 2h1v1h-1zM12 3h1v1h-1zM12 4h1v1h-1zM12 5h1v1h-1zM12 6h1v1h-1zM12 7h1v1h-1zM12 8h1v1h-1zM12 9h1v1h-1zM12 10h1v1h-1zM12 11h1v1h-1zM12 12h1v1h-1zM12 13h1v1h-1zM0 11h1v1h-1zM1 11h1v1h-1zM2 11h1v1h-1zM3 12h1v1h-1zM4 12h1v1h-1zM5 12h1v1h-1zM6 12h1v1h-1zM7 12h1v1h-1zM8 12h1v1h-1zM9 12h1v1h-1zM10 13h1v1h-1zM11 13h1v1h-1z" fill="#ababab"/><path d="M9 1h1v1h-1zM9 2h1v1h-1zM9 3h3v1h-3z" fill="#ababab" opacity="0.55"/><path d="M2 2h1v1h-1zM2 3h1v1h-1zM2 4h1v1h-1zM2 5h1v1h-1zM5 2h1v1h-1zM4 3h1v1h-1zM6 3h1v1h-1zM4 4h1v1h-1zM6 4h1v1h-1zM5 5h1v1h-1zM3 7h1v1h-1zM2 8h1v1h-1zM4 8h1v1h-1zM2 9h1v1h-1zM4 9h1v1h-1zM3 10h1v1h-1zM6 7h1v1h-1zM6 8h1v1h-1zM6 9h1v1h-1zM6 10h1v1h-1zM9 7h1v1h-1zM8 8h1v1h-1zM10 8h1v1h-1zM8 9h1v1h-1zM10 9h1v1h-1zM9 10h1v1h-1z" fill="#959cc4"/><path d="M4 2h1v1h-1zM6 2h1v1h-1zM4 5h1v1h-1zM6 5h1v1h-1zM2 7h1v1h-1zM4 7h1v1h-1zM2 10h1v1h-1zM4 10h1v1h-1zM8 7h1v1h-1zM10 7h1v1h-1zM8 10h1v1h-1zM10 10h1v1h-1z" fill="#959cc4" opacity="0.5"/></g></svg>
<span class="t" style="left:21px;top:205px;"><span style="left:0px;top:0;letter-spacing:0.084px">Impersonate</span><span style="left:65px;top:0;letter-spacing:-0.125px">a</span><span style="left:74px;top:0;letter-spacing:-0.138px">client</span><span style="left:102px;top:0;letter-spacing:0.246px">after</span><span style="left:128px;top:0;letter-spacing:0.038px">authentication</span></span>
<span class="t" style="left:355px;top:205px;"><span style="left:0px;top:0;letter-spacing:-0.062px">Not</span><span style="left:20px;top:0;letter-spacing:-0.320px">Defined</span></span>
<svg style="left:6px;top:222px;" width="13" height="14" viewBox="0 0 13 14"><g shape-rendering="crispEdges"><path d="M1 1h10l1 1v10H1z" fill="#ffffff"/><path d="M9 1h1v1h-1zM10 1h1v1h-1zM9 2h1v1h-1zM10 2h1v1h-1zM11 2h1v1h-1zM9 3h1v1h-1zM10 3h1v1h-1zM11 3h1v1h-1z" fill="#f4f4f4"/><path d="M0 0h1v1h-1zM1 0h1v1h-1zM2 0h1v1h-1zM3 0h1v1h-1zM4 0h1v1h-1zM5 0h1v1h-1zM6 0h1v1h-1zM7 0h1v1h-1zM8 0h1v1h-1zM9 0h1v1h-1zM10 0h1v1h-1zM0 0h1v1h-1zM0 1h1v1h-1zM0 2h1v1h-1zM0 3h1v1h-1zM0 4h1v1h-1zM0 5h1v1h-1zM0 6h1v1h-1zM0 7h1v1h-1zM0 8h1v1h-1zM0 9h1v1h-1zM0 10h1v1h-1zM0 11h1v1h-1zM11 1h1v1h-1zM12 2h1v1h-1zM12 3h1v1h-1zM12 4h1v1h-1zM12 5h1v1h-1zM12 6h1v1h-1zM12 7h1v1h-1zM12 8h1v1h-1zM12 9h1v1h-1zM12 10h1v1h-1zM12 11h1v1h-1zM12 12h1v1h-1zM12 13h1v1h-1zM0 11h1v1h-1zM1 11h1v1h-1zM2 11h1v1h-1zM3 12h1v1h-1zM4 12h1v1h-1zM5 12h1v1h-1zM6 12h1v1h-1zM7 12h1v1h-1zM8 12h1v1h-1zM9 12h1v1h-1zM10 13h1v1h-1zM11 13h1v1h-1z" fill="#ababab"/><path d="M9 1h1v1h-1zM9 2h1v1h-1zM9 3h3v1h-3z" fill="#ababab" opacity="0.55"/><path d="M2 2h1v1h-1zM2 3h1v1h-1zM2 4h1v1h-1zM2 5h1v1h-1zM5 2h1v1h-1zM4 3h1v1h-1zM6 3h1v1h-1zM4 4h1v1h-1zM6 4h1v1h-1zM5 5h1v1h-1zM3 7h1v1h-1zM2 8h1v1h-1zM4 8h1v1h-1zM2 9h1v1h-1zM4 9h1v1h-1zM3 10h1v1h-1zM6 7h1v1h-1zM6 8h1v1h-1zM6 9h1v1h-1zM6 10h1v1h-1zM9 7h1v1h-1zM8 8h1v1h-1zM10 8h1v1h-1zM8 9h1v1h-1zM10 9h1v1h-1zM9 10h1v1h-1z" fill="#959cc4"/><path d="M4 2h1v1h-1zM6 2h1v1h-1zM4 5h1v1h-1zM6 5h1v1h-1zM2 7h1v1h-1zM4 7h1v1h-1zM2 10h1v1h-1zM4 10h1v1h-1zM8 7h1v1h-1zM10 7h1v1h-1zM8 10h1v1h-1zM10 10h1v1h-1z" fill="#959cc4" opacity="0.5"/></g></svg>
<span class="t" style="left:21px;top:222px;"><span style="left:0px;top:0;letter-spacing:-0.029px">Increase</span><span style="left:45px;top:0;letter-spacing:-0.125px">a</span><span style="left:54px;top:0;letter-spacing:-0.255px">process</span><span style="left:94px;top:0;letter-spacing:-0.151px">working</span><span style="left:134px;top:0;letter-spacing:0.156px">set</span></span>
<span class="t" style="left:355px;top:222px;"><span style="left:0px;top:0;letter-spacing:-0.062px">Not</span><span style="left:20px;top:0;letter-spacing:-0.320px">Defined</span></span>
<svg style="left:6px;top:239px;" width="13" height="14" viewBox="0 0 13 14"><g shape-rendering="crispEdges"><path d="M1 1h10l1 1v10H1z" fill="#ffffff"/><path d="M9 1h1v1h-1zM10 1h1v1h-1zM9 2h1v1h-1zM10 2h1v1h-1zM11 2h1v1h-1zM9 3h1v1h-1zM10 3h1v1h-1zM11 3h1v1h-1z" fill="#f4f4f4"/><path d="M0 0h1v1h-1zM1 0h1v1h-1zM2 0h1v1h-1zM3 0h1v1h-1zM4 0h1v1h-1zM5 0h1v1h-1zM6 0h1v1h-1zM7 0h1v1h-1zM8 0h1v1h-1zM9 0h1v1h-1zM10 0h1v1h-1zM0 0h1v1h-1zM0 1h1v1h-1zM0 2h1v1h-1zM0 3h1v1h-1zM0 4h1v1h-1zM0 5h1v1h-1zM0 6h1v1h-1zM0 7h1v1h-1zM0 8h1v1h-1zM0 9h1v1h-1zM0 10h1v1h-1zM0 11h1v1h-1zM11 1h1v1h-1zM12 2h1v1h-1zM12 3h1v1h-1zM12 4h1v1h-1zM12 5h1v1h-1zM12 6h1v1h-1zM12 7h1v1h-1zM12 8h1v1h-1zM12 9h1v1h-1zM12 10h1v1h-1zM12 11h1v1h-1zM12 12h1v1h-1zM12 13h1v1h-1zM0 11h1v1h-1zM1 11h1v1h-1zM2 11h1v1h-1zM3 12h1v1h-1zM4 12h1v1h-1zM5 12h1v1h-1zM6 12h1v1h-1zM7 12h1v1h-1zM8 12h1v1h-1zM9 12h1v1h-1zM10 13h1v1h-1zM11 13h1v1h-1z" fill="#ababab"/><path d="M9 1h1v1h-1zM9 2h1v1h-1zM9 3h3v1h-3z" fill="#ababab" opacity="0.55"/><path d="M2 2h1v1h-1zM2 3h1v1h-1zM2 4h1v1h-1zM2 5h1v1h-1zM5 2h1v1h-1zM4 3h1v1h-1zM6 3h1v1h-1zM4 4h1v1h-1zM6 4h1v1h-1zM5 5h1v1h-1zM3 7h1v1h-1zM2 8h1v1h-1zM4 8h1v1h-1zM2 9h1v1h-1zM4 9h1v1h-1zM3 10h1v1h-1zM6 7h1v1h-1zM6 8h1v1h-1zM6 9h1v1h-1zM6 10h1v1h-1zM9 7h1v1h-1zM8 8h1v1h-1zM10 8h1v1h-1zM8 9h1v1h-1zM10 9h1v1h-1zM9 10h1v1h-1z" fill="#959cc4"/><path d="M4 2h1v1h-1zM6 2h1v1h-1zM4 5h1v1h-1zM6 5h1v1h-1zM2 7h1v1h-1zM4 7h1v1h-1zM2 10h1v1h-1zM4 10h1v1h-1zM8 7h1v1h-1zM10 7h1v1h-1zM8 10h1v1h-1zM10 10h1v1h-1z" fill="#959cc4" opacity="0.5"/></g></svg>
<span class="t" style="left:21px;top:239px;"><span style="left:0px;top:0;letter-spacing:-0.029px">Increase</span><span style="left:45px;top:0;letter-spacing:-0.288px">scheduling</span><span style="left:98px;top:0;letter-spacing:0.141px">priority</span></span>
<span class="t" style="left:355px;top:239px;"><span style="left:0px;top:0;letter-spacing:-0.062px">Not</span><span style="left:20px;top:0;letter-spacing:-0.320px">Defined</span></span>
<svg style="left:6px;top:256px;" width="13" height="14" viewBox="0 0 13 14"><g shape-rendering="crispEdges"><path d="M1 1h10l1 1v10H1z" fill="#ffffff"/><path d="M9 1h1v1h-1zM10 1h1v1h-1zM9 2h1v1h-1zM10 2h1v1h-1zM11 2h1v1h-1zM9 3h1v1h-1zM10 3h1v1h-1zM11 3h1v1h-1z" fill="#f4f4f4"/><path d="M0 0h1v1h-1zM1 0h1v1h-1zM2 0h1v1h-1zM3 0h1v1h-1zM4 0h1v1h-1zM5 0h1v1h-1zM6 0h1v1h-1zM7 0h1v1h-1zM8 0h1v1h-1zM9 0h1v1h-1zM10 0h1v1h-1zM0 0h1v1h-1zM0 1h1v1h-1zM0 2h1v1h-1zM0 3h1v1h-1zM0 4h1v1h-1zM0 5h1v1h-1zM0 6h1v1h-1zM0 7h1v1h-1zM0 8h1v1h-1zM0 9h1v1h-1zM0 10h1v1h-1zM0 11h1v1h-1zM11 1h1v1h-1zM12 2h1v1h-1zM12 3h1v1h-1zM12 4h1v1h-1zM12 5h1v1h-1zM12 6h1v1h-1zM12 7h1v1h-1zM12 8h1v1h-1zM12 9h1v1h-1zM12 10h1v1h-1zM12 11h1v1h-1zM12 12h1v1h-1zM12 13h1v1h-1zM0 11h1v1h-1zM1 11h1v1h-1zM2 11h1v1h-1zM3 12h1v1h-1zM4 12h1v1h-1zM5 12h1v1h-1zM6 12h1v1h-1zM7 12h1v1h-1zM8 12h1v1h-1zM9 12h1v1h-1zM10 13h1v1h-1zM11 13h1v1h-1z" fill="#ababab"/><path d="M9 1h1v1h-1zM9 2h1v1h-1zM9 3h3v1h-3z" fill="#ababab" opacity="0.55"/><path d="M2 2h1v1h-1zM2 3h1v1h-1zM2 4h1v1h-1zM2 5h1v1h-1zM5 2h1v1h-1zM4 3h1v1h-1zM6 3h1v1h-1zM4 4h1v1h-1zM6 4h1v1h-1zM5 5h1v1h-1zM3 7h1v1h-1zM2 8h1v1h-1zM4 8h1v1h-1zM2 9h1v1h-1zM4 9h1v1h-1zM3 10h1v1h-1zM6 7h1v1h-1zM6 8h1v1h-1zM6 9h1v1h-1zM6 10h1v1h-1zM9 7h1v1h-1zM8 8h1v1h-1zM10 8h1v1h-1zM8 9h1v1h-1zM10 9h1v1h-1zM9 10h1v1h-1z" fill="#959cc4"/><path d="M4 2h1v1h-1zM6 2h1v1h-1zM4 5h1v1h-1zM6 5h1v1h-1zM2 7h1v1h-1zM4 7h1v1h-1zM2 10h1v1h-1zM4 10h1v1h-1zM8 7h1v1h-1zM10 7h1v1h-1zM8 10h1v1h-1zM10 10h1v1h-1z" fill="#959cc4" opacity="0.5"/></g></svg>
<span class="t" style="left:21px;top:256px;"><span style="left:0px;top:0;letter-spacing:-0.495px">Load</span><span style="left:26px;top:0;letter-spacing:-0.180px">and</span><span style="left:47px;top:0;letter-spacing:-0.209px">unload</span><span style="left:82px;top:0;letter-spacing:-0.359px">device</span><span style="left:115px;top:0;letter-spacing:-0.169px">drivers</span></span>
<span class="t" style="left:355px;top:256px;"><span style="left:0px;top:0;letter-spacing:-0.062px">Not</span><span style="left:20px;top:0;letter-spacing:-0.320px">Defined</span></span>
<svg style="left:6px;top:273px;" width="13" height="14" viewBox="0 0 13 14"><g shape-rendering="crispEdges"><path d="M1 1h10l1 1v10H1z" fill="#ffffff"/><path d="M9 1h1v1h-1zM10 1h1v1h-1zM9 2h1v1h-1zM10 2h1v1h-1zM11 2h1v1h-1zM9 3h1v1h-1zM10 3h1v1h-1zM11 3h1v1h-1z" fill="#f4f4f4"/><path d="M0 0h1v1h-1zM1 0h1v1h-1zM2 0h1v1h-1zM3 0h1v1h-1zM4 0h1v1h-1zM5 0h1v1h-1zM6 0h1v1h-1zM7 0h1v1h-1zM8 0h1v1h-1zM9 0h1v1h-1zM10 0h1v1h-1zM0 0h1v1h-1zM0 1h1v1h-1zM0 2h1v1h-1zM0 3h1v1h-1zM0 4h1v1h-1zM0 5h1v1h-1zM0 6h1v1h-1zM0 7h1v1h-1zM0 8h1v1h-1zM0 9h1v1h-1zM0 10h1v1h-1zM0 11h1v1h-1zM11 1h1v1h-1zM12 2h1v1h-1zM12 3h1v1h-1zM12 4h1v1h-1zM12 5h1v1h-1zM12 6h1v1h-1zM12 7h1v1h-1zM12 8h1v1h-1zM12 9h1v1h-1zM12 10h1v1h-1zM12 11h1v1h-1zM12 12h1v1h-1zM12 13h1v1h-1zM0 11h1v1h-1zM1 11h1v1h-1zM2 11h1v1h-1zM3 12h1v1h-1zM4 12h1v1h-1zM5 12h1v1h-1zM6 12h1v1h-1zM7 12h1v1h-1zM8 12h1v1h-1zM9 12h1v1h-1zM10 13h1v1h-1zM11 13h1v1h-1z" fill="#ababab"/><path d="M9 1h1v1h-1zM9 2h1v1h-1zM9 3h3v1h-3z" fill="#ababab" opacity="0.55"/><path d="M2 2h1v1h-1zM2 3h1v1h-1zM2 4h1v1h-1zM2 5h1v1h-1zM5 2h1v1h-1zM4 3h1v1h-1zM6 3h1v1h-1zM4 4h1v1h-1zM6 4h1v1h-1zM5 5h1v1h-1zM3 7h1v1h-1zM2 8h1v1h-1zM4 8h1v1h-1zM2 9h1v1h-1zM4 9h1v1h-1zM3 10h1v1h-1zM6 7h1v1h-1zM6 8h1v1h-1zM6 9h1v1h-1zM6 10h1v1h-1zM9 7h1v1h-1zM8 8h1v1h-1zM10 8h1v1h-1zM8 9h1v1h-1zM10 9h1v1h-1zM9 10h1v1h-1z" fill="#959cc4"/><path d="M4 2h1v1h-1zM6 2h1v1h-1zM4 5h1v1h-1zM6 5h1v1h-1zM2 7h1v1h-1zM4 7h1v1h-1zM2 10h1v1h-1zM4 10h1v1h-1zM8 7h1v1h-1zM10 7h1v1h-1zM8 10h1v1h-1zM10 10h1v1h-1z" fill="#959cc4" opacity="0.5"/></g></svg>
<span class="t" style="left:21px;top:273px;"><span style="left:0px;top:0;letter-spacing:-0.600px">Lock</span><span style="left:24px;top:0;letter-spacing:-0.246px">pages</span><span style="left:56px;top:0;letter-spacing:-0.562px">in</span><span style="left:67px;top:0;letter-spacing:0.053px">memory</span></span>
<span class="t" style="left:355px;top:273px;"><span style="left:0px;top:0;letter-spacing:-0.062px">Not</span><span style="left:20px;top:0;letter-spacing:-0.320px">Defined</span></span>
<svg style="left:6px;top:290px;" width="13" height="14" viewBox="0 0 13 14"><g shape-rendering="crispEdges"><path d="M1 1h10l1 1v10H1z" fill="#ffffff"/><path d="M9 1h1v1h-1zM10 1h1v1h-1zM9 2h1v1h-1zM10 2h1v1h-1zM11 2h1v1h-1zM9 3h1v1h-1zM10 3h1v1h-1zM11 3h1v1h-1z" fill="#f4f4f4"/><path d="M0 0h1v1h-1zM1 0h1v1h-1zM2 0h1v1h-1zM3 0h1v1h-1zM4 0h1v1h-1zM5 0h1v1h-1zM6 0h1v1h-1zM7 0h1v1h-1zM8 0h1v1h-1zM9 0h1v1h-1zM10 0h1v1h-1zM0 0h1v1h-1zM0 1h1v1h-1zM0 2h1v1h-1zM0 3h1v1h-1zM0 4h1v1h-1zM0 5h1v1h-1zM0 6h1v1h-1zM0 7h1v1h-1zM0 8h1v1h-1zM0 9h1v1h-1zM0 10h1v1h-1zM0 11h1v1h-1zM11 1h1v1h-1zM12 2h1v1h-1zM12 3h1v1h-1zM12 4h1v1h-1zM12 5h1v1h-1zM12 6h1v1h-1zM12 7h1v1h-1zM12 8h1v1h-1zM12 9h1v1h-1zM12 10h1v1h-1zM12 11h1v1h-1zM12 12h1v1h-1zM12 13h1v1h-1zM0 11h1v1h-1zM1 11h1v1h-1zM2 11h1v1h-1zM3 12h1v1h-1zM4 12h1v1h-1zM5 12h1v1h-1zM6 12h1v1h-1zM7 12h1v1h-1zM8 12h1v1h-1zM9 12h1v1h-1zM10 13h1v1h-1zM11 13h1v1h-1z" fill="#ababab"/><path d="M9 1h1v1h-1zM9 2h1v1h-1zM9 3h3v1h-3z" fill="#ababab" opacity="0.55"/><path d="M2 2h1v1h-1zM2 3h1v1h-1zM2 4h1v1h-1zM2 5h1v1h-1zM5 2h1v1h-1zM4 3h1v1h-1zM6 3h1v1h-1zM4 4h1v1h-1zM6 4h1v1h-1zM5 5h1v1h-1zM3 7h1v1h-1zM2 8h1v1h-1zM4 8h1v1h-1zM2 9h1v1h-1zM4 9h1v1h-1zM3 10h1v1h-1zM6 7h1v1h-1zM6 8h1v1h-1zM6 9h1v1h-1zM6 10h1v1h-1zM9 7h1v1h-1zM8 8h1v1h-1zM10 8h1v1h-1zM8 9h1v1h-1zM10 9h1v1h-1zM9 10h1v1h-1z" fill="#959cc4"/><path d="M4 2h1v1h-1zM6 2h1v1h-1zM4 5h1v1h-1zM6 5h1v1h-1zM2 7h1v1h-1zM4 7h1v1h-1zM2 10h1v1h-1zM4 10h1v1h-1zM8 7h1v1h-1zM10 7h1v1h-1zM8 10h1v1h-1zM10 10h1v1h-1z" fill="#959cc4" opacity="0.5"/></g></svg>
<span class="t" style="left:21px;top:290px;"><span style="left:0px;top:0;letter-spacing:-0.600px">Log</span><span style="left:20px;top:0;letter-spacing:-0.250px">on</span><span style="left:35px;top:0;letter-spacing:-0.600px">as</span><span style="left:49px;top:0;letter-spacing:-0.125px">a</span><span style="left:58px;top:0;letter-spacing:0.020px">batch</span><span style="left:88px;top:0;letter-spacing:0.156px">job</span></span>
<span class="t" style="left:355px;top:290px;"><span style="left:0px;top:0;letter-spacing:-0.062px">Not</span><span style="left:20px;top:0;letter-spacing:-0.320px">Defined</span></span>
<svg style="left:6px;top:307px;" width="13" height="14" viewBox="0 0 13 14"><g shape-rendering="crispEdges"><path d="M1 1h10l1 1v10H1z" fill="#ffffff"/><path d="M9 1h1v1h-1zM10 1h1v1h-1zM9 2h1v1h-1zM10 2h1v1h-1zM11 2h1v1h-1zM9 3h1v1h-1zM10 3h1v1h-1zM11 3h1v1h-1z" fill="#f4f4f4"/><path d="M0 0h1v1h-1zM1 0h1v1h-1zM2 0h1v1h-1zM3 0h1v1h-1zM4 0h1v1h-1zM5 0h1v1h-1zM6 0h1v1h-1zM7 0h1v1h-1zM8 0h1v1h-1zM9 0h1v1h-1zM10 0h1v1h-1zM0 0h1v1h-1zM0 1h1v1h-1zM0 2h1v1h-1zM0 3h1v1h-1zM0 4h1v1h-1zM0 5h1v1h-1zM0 6h1v1h-1zM0 7h1v1h-1zM0 8h1v1h-1zM0 9h1v1h-1zM0 10h1v1h-1zM0 11h1v1h-1zM11 1h1v1h-1zM12 2h1v1h-1zM12 3h1v1h-1zM12 4h1v1h-1zM12 5h1v1h-1zM12 6h1v1h-1zM12 7h1v1h-1zM12 8h1v1h-1zM12 9h1v1h-1zM12 10h1v1h-1zM12 11h1v1h-1zM12 12h1v1h-1zM12 13h1v1h-1zM0 11h1v1h-1zM1 11h1v1h-1zM2 11h1v1h-1zM3 12h1v1h-1zM4 12h1v1h-1zM5 12h1v1h-1zM6 12h1v1h-1zM7 12h1v1h-1zM8 12h1v1h-1zM9 12h1v1h-1zM10 13h1v1h-1zM11 13h1v1h-1z" fill="#ababab"/><path d="M9 1h1v1h-1zM9 2h1v1h-1zM9 3h3v1h-3z" fill="#ababab" opacity="0.55"/><path d="M2 2h1v1h-1zM2 3h1v1h-1zM2 4h1v1h-1zM2 5h1v1h-1zM5 2h1v1h-1zM4 3h1v1h-1zM6 3h1v1h-1zM4 4h1v1h-1zM6 4h1v1h-1zM5 5h1v1h-1zM3 7h1v1h-1zM2 8h1v1h-1zM4 8h1v1h-1zM2 9h1v1h-1zM4 9h1v1h-1zM3 10h1v1h-1zM6 7h1v1h-1zM6 8h1v1h-1zM6 9h1v1h-1zM6 10h1v1h-1zM9 7h1v1h-1zM8 8h1v1h-1zM10 8h1v1h-1zM8 9h1v1h-1zM10 9h1v1h-1zM9 10h1v1h-1z" fill="#959cc4"/><path d="M4 2h1v1h-1zM6 2h1v1h-1zM4 5h1v1h-1zM6 5h1v1h-1zM2 7h1v1h-1zM4 7h1v1h-1zM2 10h1v1h-1zM4 10h1v1h-1zM8 7h1v1h-1zM10 7h1v1h-1zM8 10h1v1h-1zM10 10h1v1h-1z" fill="#959cc4" opacity="0.5"/></g></svg>
<span class="t" style="left:21px;top:307px;"><span style="left:0px;top:0;letter-spacing:-0.600px">Log</span><span style="left:20px;top:0;letter-spacing:-0.250px">on</span><span style="left:35px;top:0;letter-spacing:-0.600px">as</span><span style="left:49px;top:0;letter-spacing:-0.125px">a</span><span style="left:58px;top:0;letter-spacing:-0.307px">service</span></span>
<div style="left:354px;top:306px;width:136px;height:16px;filter:blur(1px);background:linear-gradient(90deg,#e6e6e6,#dadada 15%,#d4d4d4 40%,#dcdcdc 60%,#e6e6e6 85%,#e8e8e8)"></div>
<svg style="left:6px;top:324px;" width="13" height="14" viewBox="0 0 13 14"><g shape-rendering="crispEdges"><path d="M1 1h10l1 1v10H1z" fill="#ffffff"/><path d="M9 1h1v1h-1zM10 1h1v1h-1zM9 2h1v1h-1zM10 2h1v1h-1zM11 2h1v1h-1zM9 3h1v1h-1zM10 3h1v1h-1zM11 3h1v1h-1z" fill="#f4f4f4"/><path d="M0 0h1v1h-1zM1 0h1v1h-1zM2 0h1v1h-1zM3 0h1v1h-1zM4 0h1v1h-1zM5 0h1v1h-1zM6 0h1v1h-1zM7 0h1v1h-1zM8 0h1v1h-1zM9 0h1v1h-1zM10 0h1v1h-1zM0 0h1v1h-1zM0 1h1v1h-1zM0 2h1v1h-1zM0 3h1v1h-1zM0 4h1v1h-1zM0 5h1v1h-1zM0 6h1v1h-1zM0 7h1v1h-1zM0 8h1v1h-1zM0 9h1v1h-1zM0 10h1v1h-1zM0 11h1v1h-1zM11 1h1v1h-1zM12 2h1v1h-1zM12 3h1v1h-1zM12 4h1v1h-1zM12 5h1v1h-1zM12 6h1v1h-1zM12 7h1v1h-1zM12 8h1v1h-1zM12 9h1v1h-1zM12 10h1v1h-1zM12 11h1v1h-1zM12 12h1v1h-1zM12 13h1v1h-1zM0 11h1v1h-1zM1 11h1v1h-1zM2 11h1v1h-1zM3 12h1v1h-1zM4 12h1v1h-1zM5 12h1v1h-1zM6 12h1v1h-1zM7 12h1v1h-1zM8 12h1v1h-1zM9 12h1v1h-1zM10 13h1v1h-1zM11 13h1v1h-1z" fill="#ababab"/><path d="M9 1h1v1h-1zM9 2h1v1h-1zM9 3h3v1h-3z" fill="#ababab" opacity="0.55"/><path d="M2 2h1v1h-1zM2 3h1v1h-1zM2 4h1v1h-1zM2 5h1v1h-1zM5 2h1v1h-1zM4 3h1v1h-1zM6 3h1v1h-1zM4 4h1v1h-1zM6 4h1v1h-1zM5 5h1v1h-1zM3 7h1v1h-1zM2 8h1v1h-1zM4 8h1v1h-1zM2 9h1v1h-1zM4 9h1v1h-1zM3 10h1v1h-1zM6 7h1v1h-1zM6 8h1v1h-1zM6 9h1v1h-1zM6 10h1v1h-1zM9 7h1v1h-1zM8 8h1v1h-1zM10 8h1v1h-1zM8 9h1v1h-1zM10 9h1v1h-1zM9 10h1v1h-1z" fill="#959cc4"/><path d="M4 2h1v1h-1zM6 2h1v1h-1zM4 5h1v1h-1zM6 5h1v1h-1zM2 7h1v1h-1zM4 7h1v1h-1zM2 10h1v1h-1zM4 10h1v1h-1zM8 7h1v1h-1zM10 7h1v1h-1zM8 10h1v1h-1zM10 10h1v1h-1z" fill="#959cc4" opacity="0.5"/></g></svg>
<span class="t" style="left:21px;top:324px;"><span style="left:0px;top:0;letter-spacing:-0.353px">Manage</span><span style="left:41px;top:0;letter-spacing:-0.078px">auditing</span><span style="left:82px;top:0;letter-spacing:-0.180px">and</span><span style="left:103px;top:0;letter-spacing:0.013px">security</span><span style="left:144px;top:0;letter-spacing:-0.344px">log</span></span>
<span class="t" style="left:355px;top:324px;"><span style="left:0px;top:0;letter-spacing:-0.062px">Not</span><span style="left:20px;top:0;letter-spacing:-0.320px">Defined</span></span>
<svg style="left:6px;top:341px;" width="13" height="14" viewBox="0 0 13 14"><g shape-rendering="crispEdges"><path d="M1 1h10l1 1v10H1z" fill="#ffffff"/><path d="M9 1h1v1h-1zM10 1h1v1h-1zM9 2h1v1h-1zM10 2h1v1h-1zM11 2h1v1h-1zM9 3h1v1h-1zM10 3h1v1h-1zM11 3h1v1h-1z" fill="#f4f4f4"/><path d="M0 0h1v1h-1zM1 0h1v1h-1zM2 0h1v1h-1zM3 0h1v1h-1zM4 0h1v1h-1zM5 0h1v1h-1zM6 0h1v1h-1zM7 0h1v1h-1zM8 0h1v1h-1zM9 0h1v1h-1zM10 0h1v1h-1zM0 0h1v1h-1zM0 1h1v1h-1zM0 2h1v1h-1zM0 3h1v1h-1zM0 4h1v1h-1zM0 5h1v1h-1zM0 6h1v1h-1zM0 7h1v1h-1zM0 8h1v1h-1zM0 9h1v1h-1zM0 10h1v1h-1zM0 11h1v1h-1zM11 1h1v1h-1zM12 2h1v1h-1zM12 3h1v1h-1zM12 4h1v1h-1zM12 5h1v1h-1zM12 6h1v1h-1zM12 7h1v1h-1zM12 8h1v1h-1zM12 9h1v1h-1zM12 10h1v1h-1zM12 11h1v1h-1zM12 12h1v1h-1zM12 13h1v1h-1zM0 11h1v1h-1zM1 11h1v1h-1zM2 11h1v1h-1zM3 12h1v1h-1zM4 12h1v1h-1zM5 12h1v1h-1zM6 12h1v1h-1zM7 12h1v1h-1zM8 12h1v1h-1zM9 12h1v1h-1zM10 13h1v1h-1zM11 13h1v1h-1z" fill="#ababab"/><path d="M9 1h1v1h-1zM9 2h1v1h-1zM9 3h3v1h-3z" fill="#ababab" opacity="0.55"/><path d="M2 2h1v1h-1zM2 3h1v1h-1zM2 4h1v1h-1zM2 5h1v1h-1zM5 2h1v1h-1zM4 3h1v1h-1zM6 3h1v1h-1zM4 4h1v1h-1zM6 4h1v1h-1zM5 5h1v1h-1zM3 7h1v1h-1zM2 8h1v1h-1zM4 8h1v1h-1zM2 9h1v1h-1zM4 9h1v1h-1zM3 10h1v1h-1zM6 7h1v1h-1zM6 8h1v1h-1zM6 9h1v1h-1zM6 10h1v1h-1zM9 7h1v1h-1zM8 8h1v1h-1zM10 8h1v1h-1zM8 9h1v1h-1zM10 9h1v1h-1zM9 10h1v1h-1z" fill="#959cc4"/><path d="M4 2h1v1h-1zM6 2h1v1h-1zM4 5h1v1h-1zM6 5h1v1h-1zM2 7h1v1h-1zM4 7h1v1h-1zM2 10h1v1h-1zM4 10h1v1h-1zM8 7h1v1h-1zM10 7h1v1h-1zM8 10h1v1h-1zM10 10h1v1h-1z" fill="#959cc4" opacity="0.5"/></g></svg>
<span class="t" style="left:21px;top:341px;"><span style="left:0px;top:0;letter-spacing:-0.281px">Modify</span><span style="left:34px;top:0;letter-spacing:-0.250px">an</span><span style="left:49px;top:0;letter-spacing:0.128px">object</span><span style="left:82px;top:0;letter-spacing:-0.312px">label</span></span>
<span class="t" style="left:355px;top:341px;"><span style="left:0px;top:0;letter-spacing:-0.062px">Not</span><span style="left:20px;top:0;letter-spacing:-0.320px">Defined</span></span>
<svg style="left:6px;top:358px;" width="13" height="14" viewBox="0 0 13 14"><g shape-rendering="crispEdges"><path d="M1 1h10l1 1v10H1z" fill="#ffffff"/><path d="M9 1h1v1h-1zM10 1h1v1h-1zM9 2h1v1h-1zM10 2h1v1h-1zM11 2h1v1h-1zM9 3h1v1h-1zM10 3h1v1h-1zM11 3h1v1h-1z" fill="#f4f4f4"/><path d="M0 0h1v1h-1zM1 0h1v1h-1zM2 0h1v1h-1zM3 0h1v1h-1zM4 0h1v1h-1zM5 0h1v1h-1zM6 0h1v1h-1zM7 0h1v1h-1zM8 0h1v1h-1zM9 0h1v1h-1zM10 0h1v1h-1zM0 0h1v1h-1zM0 1h1v1h-1zM0 2h1v1h-1zM0 3h1v1h-1zM0 4h1v1h-1zM0 5h1v1h-1zM0 6h1v1h-1zM0 7h1v1h-1zM0 8h1v1h-1zM0 9h1v1h-1zM0 10h1v1h-1zM0 11h1v1h-1zM11 1h1v1h-1zM12 2h1v1h-1zM12 3h1v1h-1zM12 4h1v1h-1zM12 5h1v1h-1zM12 6h1v1h-1zM12 7h1v1h-1zM12 8h1v1h-1zM12 9h1v1h-1zM12 10h1v1h-1zM12 11h1v1h-1zM12 12h1v1h-1zM12 13h1v1h-1zM0 11h1v1h-1zM1 11h1v1h-1zM2 11h1v1h-1zM3 12h1v1h-1zM4 12h1v1h-1zM5 12h1v1h-1zM6 12h1v1h-1zM7 12h1v1h-1zM8 12h1v1h-1zM9 12h1v1h-1zM10 13h1v1h-1zM11 13h1v1h-1z" fill="#ababab"/><path d="M9 1h1v1h-1zM9 2h1v1h-1zM9 3h3v1h-3z" fill="#ababab" opacity="0.55"/><path d="M2 2h1v1h-1zM2 3h1v1h-1zM2 4h1v1h-1zM2 5h1v1h-1zM5 2h1v1h-1zM4 3h1v1h-1zM6 3h1v1h-1zM4 4h1v1h-1zM6 4h1v1h-1zM5 5h1v1h-1zM3 7h1v1h-1zM2 8h1v1h-1zM4 8h1v1h-1zM2 9h1v1h-1zM4 9h1v1h-1zM3 10h1v1h-1zM6 7h1v1h-1zM6 8h1v1h-1zM6 9h1v1h-1zM6 10h1v1h-1zM9 7h1v1h-1zM8 8h1v1h-1zM10 8h1v1h-1zM8 9h1v1h-1zM10 9h1v1h-1zM9 10h1v1h-1z" fill="#959cc4"/><path d="M4 2h1v1h-1zM6 2h1v1h-1zM4 5h1v1h-1zM6 5h1v1h-1zM2 7h1v1h-1zM4 7h1v1h-1zM2 10h1v1h-1zM4 10h1v1h-1zM8 7h1v1h-1zM10 7h1v1h-1zM8 10h1v1h-1zM10 10h1v1h-1z" fill="#959cc4" opacity="0.5"/></g></svg>
<span class="t" style="left:21px;top:358px;"><span style="left:0px;top:0;letter-spacing:-0.281px">Modify</span><span style="left:34px;top:0;letter-spacing:-0.025px">firmware</span><span style="left:79px;top:0;letter-spacing:-0.055px">environment</span><span style="left:142px;top:0;letter-spacing:-0.359px">values</span></span>
<span class="t" style="left:355px;top:358px;"><span style="left:0px;top:0;letter-spacing:-0.062px">Not</span><span style="left:20px;top:0;letter-spacing:-0.320px">Defined</span></span>
<svg style="left:6px;top:375px;" width="13" height="14" viewBox="0 0 13 14"><g shape-rendering="crispEdges"><path d="M1 1h10l1 1v10H1z" fill="#ffffff"/><path d="M9 1h1v1h-1zM10 1h1v1h-1zM9 2h1v1h-1zM10 2h1v1h-1zM11 2h1v1h-1zM9 3h1v1h-1zM10 3h1v1h-1zM11 3h1v1h-1z" fill="#f4f4f4"/><path d="M0 0h1v1h-1zM1 0h1v1h-1zM2 0h1v1h-1zM3 0h1v1h-1zM4 0h1v1h-1zM5 0h1v1h-1zM6 0h1v1h-1zM7 0h1v1h-1zM8 0h1v1h-1zM9 0h1v1h-1zM10 0h1v1h-1zM0 0h1v1h-1zM0 1h1v1h-1zM0 2h1v1h-1zM0 3h1v1h-1zM0 4h1v1h-1zM0 5h1v1h-1zM0 6h1v1h-1zM0 7h1v1h-1zM0 8h1v1h-1zM0 9h1v1h-1zM0 10h1v1h-1zM0 11h1v1h-1zM11 1h1v1h-1zM12 2h1v1h-1zM12 3h1v1h-1zM12 4h1v1h-1zM12 5h1v1h-1zM12 6h1v1h-1zM12 7h1v1h-1zM12 8h1v1h-1zM12 9h1v1h-1zM12 10h1v1h-1zM12 11h1v1h-1zM12 12h1v1h-1zM12 13h1v1h-1zM0 11h1v1h-1zM1 11h1v1h-1zM2 11h1v1h-1zM3 12h1v1h-1zM4 12h1v1h-1zM5 12h1v1h-1zM6 12h1v1h-1zM7 12h1v1h-1zM8 12h1v1h-1zM9 12h1v1h-1zM10 13h1v1h-1zM11 13h1v1h-1z" fill="#ababab"/><path d="M9 1h1v1h-1zM9 2h1v1h-1zM9 3h3v1h-3z" fill="#ababab" opacity="0.55"/><path d="M2 2h1v1h-1zM2 3h1v1h-1zM2 4h1v1h-1zM2 5h1v1h-1zM5 2h1v1h-1zM4 3h1v1h-1zM6 3h1v1h-1zM4 4h1v1h-1zM6 4h1v1h-1zM5 5h1v1h-1zM3 7h1v1h-1zM2 8h1v1h-1zM4 8h1v1h-1zM2 9h1v1h-1zM4 9h1v1h-1zM3 10h1v1h-1zM6 7h1v1h-1zM6 8h1v1h-1zM6 9h1v1h-1zM6 10h1v1h-1zM9 7h1v1h-1zM8 8h1v1h-1zM10 8h1v1h-1zM8 9h1v1h-1zM10 9h1v1h-1zM9 10h1v1h-1z" fill="#959cc4"/><path d="M4 2h1v1h-1zM6 2h1v1h-1zM4 5h1v1h-1zM6 5h1v1h-1zM2 7h1v1h-1zM4 7h1v1h-1zM2 10h1v1h-1zM4 10h1v1h-1zM8 7h1v1h-1zM10 7h1v1h-1zM8 10h1v1h-1zM10 10h1v1h-1z" fill="#959cc4" opacity="0.5"/></g></svg>
<span class="t" style="left:21px;top:375px;"><span style="left:0px;top:0;letter-spacing:-0.188px">Perform</span><span style="left:41px;top:0;letter-spacing:-0.294px">volume</span><span style="left:78px;top:0;letter-spacing:-0.100px">maintenance</span><span style="left:143px;top:0;letter-spacing:-0.172px">tasks</span></span>
<span class="t" style="left:355px;top:375px;"><span style="left:0px;top:0;letter-spacing:-0.062px">Not</span><span style="left:20px;top:0;letter-spacing:-0.320px">Defined</span></span>
<svg style="left:6px;top:392px;" width="13" height="14" viewBox="0 0 13 14"><g shape-rendering="crispEdges"><path d="M1 1h10l1 1v10H1z" fill="#ffffff"/><path d="M9 1h1v1h-1zM10 1h1v1h-1zM9 2h1v1h-1zM10 2h1v1h-1zM11 2h1v1h-1zM9 3h1v1h-1zM10 3h1v1h-1zM11 3h1v1h-1z" fill="#f4f4f4"/><path d="M0 0h1v1h-1zM1 0h1v1h-1zM2 0h1v1h-1zM3 0h1v1h-1zM4 0h1v1h-1zM5 0h1v1h-1zM6 0h1v1h-1zM7 0h1v1h-1zM8 0h1v1h-1zM9 0h1v1h-1zM10 0h1v1h-1zM0 0h1v1h-1zM0 1h1v1h-1zM0 2h1v1h-1zM0 3h1v1h-1zM0 4h1v1h-1zM0 5h1v1h-1zM0 6h1v1h-1zM0 7h1v1h-1zM0 8h1v1h-1zM0 9h1v1h-1zM0 10h1v1h-1zM0 11h1v1h-1zM11 1h1v1h-1zM12 2h1v1h-1zM12 3h1v1h-1zM12 4h1v1h-1zM12 5h1v1h-1zM12 6h1v1h-1zM12 7h1v1h-1zM12 8h1v1h-1zM12 9h1v1h-1zM12 10h1v1h-1zM12 11h1v1h-1zM12 12h1v1h-1zM12 13h1v1h-1zM0 11h1v1h-1zM1 11h1v1h-1zM2 11h1v1h-1zM3 12h1v1h-1zM4 12h1v1h-1zM5 12h1v1h-1zM6 12h1v1h-1zM7 12h1v1h-1zM8 12h1v1h-1zM9 12h1v1h-1zM10 13h1v1h-1zM11 13h1v1h-1z" fill="#ababab"/><path d="M9 1h1v1h-1zM9 2h1v1h-1zM9 3h3v1h-3z" fill="#ababab" opacity="0.55"/><path d="M2 2h1v1h-1zM2 3h1v1h-1zM2 4h1v1h-1zM2 5h1v1h-1zM5 2h1v1h-1zM4 3h1v1h-1zM6 3h1v1h-1zM4 4h1v1h-1zM6 4h1v1h-1zM5 5h1v1h-1zM3 7h1v1h-1zM2 8h1v1h-1zM4 8h1v1h-1zM2 9h1v1h-1zM4 9h1v1h-1zM3 10h1v1h-1zM6 7h1v1h-1zM6 8h1v1h-1zM6 9h1v1h-1zM6 10h1v1h-1zM9 7h1v1h-1zM8 8h1v1h-1zM10 8h1v1h-1zM8 9h1v1h-1zM10 9h1v1h-1zM9 10h1v1h-1z" fill="#959cc4"/><path d="M4 2h1v1h-1zM6 2h1v1h-1zM4 5h1v1h-1zM6 5h1v1h-1zM2 7h1v1h-1zM4 7h1v1h-1zM2 10h1v1h-1zM4 10h1v1h-1zM8 7h1v1h-1zM10 7h1v1h-1zM8 10h1v1h-1zM10 10h1v1h-1z" fill="#959cc4" opacity="0.5"/></g></svg>
<span class="t" style="left:21px;top:392px;"><span style="left:0px;top:0;letter-spacing:-0.365px">Profile</span><span style="left:32px;top:0;letter-spacing:-0.350px">single</span><span style="left:62px;top:0;letter-spacing:-0.255px">process</span></span>
<span class="t" style="left:355px;top:392px;"><span style="left:0px;top:0;letter-spacing:-0.062px">Not</span><span style="left:20px;top:0;letter-spacing:-0.320px">Defined</span></span>
<svg style="left:6px;top:409px;" width="13" height="14" viewBox="0 0 13 14"><g shape-rendering="crispEdges"><path d="M1 1h10l1 1v10H1z" fill="#ffffff"/><path d="M9 1h1v1h-1zM10 1h1v1h-1zM9 2h1v1h-1zM10 2h1v1h-1zM11 2h1v1h-1zM9 3h1v1h-1zM10 3h1v1h-1zM11 3h1v1h-1z" fill="#f4f4f4"/><path d="M0 0h1v1h-1zM1 0h1v1h-1zM2 0h1v1h-1zM3 0h1v1h-1zM4 0h1v1h-1zM5 0h1v1h-1zM6 0h1v1h-1zM7 0h1v1h-1zM8 0h1v1h-1zM9 0h1v1h-1zM10 0h1v1h-1zM0 0h1v1h-1zM0 1h1v1h-1zM0 2h1v1h-1zM0 3h1v1h-1zM0 4h1v1h-1zM0 5h1v1h-1zM0 6h1v1h-1zM0 7h1v1h-1zM0 8h1v1h-1zM0 9h1v1h-1zM0 10h1v1h-1zM0 11h1v1h-1zM11 1h1v1h-1zM12 2h1v1h-1zM12 3h1v1h-1zM12 4h1v1h-1zM12 5h1v1h-1zM12 6h1v1h-1zM12 7h1v1h-1zM12 8h1v1h-1zM12 9h1v1h-1zM12 10h1v1h-1zM12 11h1v1h-1zM12 12h1v1h-1zM12 13h1v1h-1zM0 11h1v1h-1zM1 11h1v1h-1zM2 11h1v1h-1zM3 12h1v1h-1zM4 12h1v1h-1zM5 12h1v1h-1zM6 12h1v1h-1zM7 12h1v1h-1zM8 12h1v1h-1zM9 12h1v1h-1zM10 13h1v1h-1zM11 13h1v1h-1z" fill="#ababab"/><path d="M9 1h1v1h-1zM9 2h1v1h-1zM9 3h3v1h-3z" fill="#ababab" opacity="0.55"/><path d="M2 2h1v1h-1zM2 3h1v1h-1zM2 4h1v1h-1zM2 5h1v1h-1zM5 2h1v1h-1zM4 3h1v1h-1zM6 3h1v1h-1zM4 4h1v1h-1zM6 4h1v1h-1zM5 5h1v1h-1zM3 7h1v1h-1zM2 8h1v1h-1zM4 8h1v1h-1zM2 9h1v1h-1zM4 9h1v1h-1zM3 10h1v1h-1zM6 7h1v1h-1zM6 8h1v1h-1zM6 9h1v1h-1zM6 10h1v1h-1zM9 7h1v1h-1zM8 8h1v1h-1zM10 8h1v1h-1zM8 9h1v1h-1zM10 9h1v1h-1zM9 10h1v1h-1z" fill="#959cc4"/><path d="M4 2h1v1h-1zM6 2h1v1h-1zM4 5h1v1h-1zM6 5h1v1h-1zM2 7h1v1h-1zM4 7h1v1h-1zM2 10h1v1h-1zM4 10h1v1h-1zM8 7h1v1h-1zM10 7h1v1h-1zM8 10h1v1h-1zM10 10h1v1h-1z" fill="#959cc4" opacity="0.5"/></g></svg>
<span class="t" style="left:21px;top:409px;"><span style="left:0px;top:0;letter-spacing:-0.365px">Profile</span><span style="left:32px;top:0;letter-spacing:0.031px">system</span><span style="left:70px;top:0;letter-spacing:-0.077px">performance</span></span>
<span class="t" style="left:355px;top:409px;"><span style="left:0px;top:0;letter-spacing:-0.062px">Not</span><span style="left:20px;top:0;letter-spacing:-0.320px">Defined</span></span>
<svg style="left:6px;top:426px;" width="13" height="14" viewBox="0 0 13 14"><g shape-rendering="crispEdges"><path d="M1 1h10l1 1v10H1z" fill="#ffffff"/><path d="M9 1h1v1h-1zM10 1h1v1h-1zM9 2h1v1h-1zM10 2h1v1h-1zM11 2h1v1h-1zM9 3h1v1h-1zM10 3h1v1h-1zM11 3h1v1h-1z" fill="#f4f4f4"/><path d="M0 0h1v1h-1zM1 0h1v1h-1zM2 0h1v1h-1zM3 0h1v1h-1zM4 0h1v1h-1zM5 0h1v1h-1zM6 0h1v1h-1zM7 0h1v1h-1zM8 0h1v1h-1zM9 0h1v1h-1zM10 0h1v1h-1zM0 0h1v1h-1zM0 1h1v1h-1zM0 2h1v1h-1zM0 3h1v1h-1zM0 4h1v1h-1zM0 5h1v1h-1zM0 6h1v1h-1zM0 7h1v1h-1zM0 8h1v1h-1zM0 9h1v1h-1zM0 10h1v1h-1zM0 11h1v1h-1zM11 1h1v1h-1zM12 2h1v1h-1zM12 3h1v1h-1zM12 4h1v1h-1zM12 5h1v1h-1zM12 6h1v1h-1zM12 7h1v1h-1zM12 8h1v1h-1zM12 9h1v1h-1zM12 10h1v1h-1zM12 11h1v1h-1zM12 12h1v1h-1zM12 13h1v1h-1zM0 11h1v1h-1zM1 11h1v1h-1zM2 11h1v1h-1zM3 12h1v1h-1zM4 12h1v1h-1zM5 12h1v1h-1zM6 12h1v1h-1zM7 12h1v1h-1zM8 12h1v1h-1zM9 12h1v1h-1zM10 13h1v1h-1zM11 13h1v1h-1z" fill="#ababab"/><path d="M9 1h1v1h-1zM9 2h1v1h-1zM9 3h3v1h-3z" fill="#ababab" opacity="0.55"/><path d="M2 2h1v1h-1zM2 3h1v1h-1zM2 4h1v1h-1zM2 5h1v1h-1zM5 2h1v1h-1zM4 3h1v1h-1zM6 3h1v1h-1zM4 4h1v1h-1zM6 4h1v1h-1zM5 5h1v1h-1zM3 7h1v1h-1zM2 8h1v1h-1zM4 8h1v1h-1zM2 9h1v1h-1zM4 9h1v1h-1zM3 10h1v1h-1zM6 7h1v1h-1zM6 8h1v1h-1zM6 9h1v1h-1zM6 10h1v1h-1zM9 7h1v1h-1zM8 8h1v1h-1zM10 8h1v1h-1zM8 9h1v1h-1zM10 9h1v1h-1zM9 10h1v1h-1z" fill="#959cc4"/><path d="M4 2h1v1h-1zM6 2h1v1h-1zM4 5h1v1h-1zM6 5h1v1h-1zM2 7h1v1h-1zM4 7h1v1h-1zM2 10h1v1h-1zM4 10h1v1h-1zM8 7h1v1h-1zM10 7h1v1h-1zM8 10h1v1h-1zM10 10h1v1h-1z" fill="#959cc4" opacity="0.5"/></g></svg>
<span class="t" style="left:21px;top:426px;"><span style="left:0px;top:0;letter-spacing:-0.594px">Remove</span><span style="left:41px;top:0;letter-spacing:0.020px">computer</span><span style="left:90px;top:0;letter-spacing:0.000px">from</span><span style="left:115px;top:0;letter-spacing:-0.320px">docking</span><span style="left:154px;top:0;letter-spacing:0.096px">station</span></span>
<span class="t" style="left:355px;top:426px;"><span style="left:0px;top:0;letter-spacing:-0.062px">Not</span><span style="left:20px;top:0;letter-spacing:-0.320px">Defined</span></span>
<svg style="left:6px;top:443px;" width="13" height="14" viewBox="0 0 13 14"><g shape-rendering="crispEdges"><path d="M1 1h10l1 1v10H1z" fill="#ffffff"/><path d="M9 1h1v1h-1zM10 1h1v1h-1zM9 2h1v1h-1zM10 2h1v1h-1zM11 2h1v1h-1zM9 3h1v1h-1zM10 3h1v1h-1zM11 3h1v1h-1z" fill="#f4f4f4"/><path d="M0 0h1v1h-1zM1 0h1v1h-1zM2 0h1v1h-1zM3 0h1v1h-1zM4 0h1v1h-1zM5 0h1v1h-1zM6 0h1v1h-1zM7 0h1v1h-1zM8 0h1v1h-1zM9 0h1v1h-1zM10 0h1v1h-1zM0 0h1v1h-1zM0 1h1v1h-1zM0 2h1v1h-1zM0 3h1v1h-1zM0 4h1v1h-1zM0 5h1v1h-1zM0 6h1v1h-1zM0 7h1v1h-1zM0 8h1v1h-1zM0 9h1v1h-1zM0 10h1v1h-1zM0 11h1v1h-1zM11 1h1v1h-1zM12 2h1v1h-1zM12 3h1v1h-1zM12 4h1v1h-1zM12 5h1v1h-1zM12 6h1v1h-1zM12 7h1v1h-1zM12 8h1v1h-1zM12 9h1v1h-1zM12 10h1v1h-1zM12 11h1v1h-1zM12 12h1v1h-1zM12 13h1v1h-1zM0 11h1v1h-1zM1 11h1v1h-1zM2 11h1v1h-1zM3 12h1v1h-1zM4 12h1v1h-1zM5 12h1v1h-1zM6 12h1v1h-1zM7 12h1v1h-1zM8 12h1v1h-1zM9 12h1v1h-1zM10 13h1v1h-1zM11 13h1v1h-1z" fill="#ababab"/><path d="M9 1h1v1h-1zM9 2h1v1h-1zM9 3h3v1h-3z" fill="#ababab" opacity="0.55"/><path d="M2 2h1v1h-1zM2 3h1v1h-1zM2 4h1v1h-1zM2 5h1v1h-1zM5 2h1v1h-1zM4 3h1v1h-1zM6 3h1v1h-1zM4 4h1v1h-1zM6 4h1v1h-1zM5 5h1v1h-1zM3 7h1v1h-1zM2 8h1v1h-1zM4 8h1v1h-1zM2 9h1v1h-1zM4 9h1v1h-1zM3 10h1v1h-1zM6 7h1v1h-1zM6 8h1v1h-1zM6 9h1v1h-1zM6 10h1v1h-1zM9 7h1v1h-1zM8 8h1v1h-1zM10 8h1v1h-1zM8 9h1v1h-1zM10 9h1v1h-1zM9 10h1v1h-1z" fill="#959cc4"/><path d="M4 2h1v1h-1zM6 2h1v1h-1zM4 5h1v1h-1zM6 5h1v1h-1zM2 7h1v1h-1zM4 7h1v1h-1zM2 10h1v1h-1zM4 10h1v1h-1zM8 7h1v1h-1zM10 7h1v1h-1zM8 10h1v1h-1zM10 10h1v1h-1z" fill="#959cc4" opacity="0.5"/></g></svg>
<span class="t" style="left:21px;top:443px;"><span style="left:0px;top:0;letter-spacing:-0.560px">Replace</span><span style="left:40px;top:0;letter-spacing:-0.125px">a</span><span style="left:49px;top:0;letter-spacing:-0.255px">process</span><span style="left:89px;top:0;letter-spacing:-0.406px">level</span><span style="left:113px;top:0;letter-spacing:0.020px">token</span></span>
<span class="t" style="left:355px;top:443px;"><span style="left:0px;top:0;letter-spacing:-0.062px">Not</span><span style="left:20px;top:0;letter-spacing:-0.320px">Defined</span></span>
</div>
<div style="left:266px;top:77px;width:16px;height:16px;background:#d4d0c8;"></div>
<div style="left:266px;top:77px;width:16px;height:1px;background:#d4d0c8;"></div>
<div style="left:266px;top:77px;width:1px;height:16px;background:#d4d0c8;"></div>
<div style="left:267px;top:78px;width:14px;height:1px;background:#ffffff;"></div>
<div style="left:267px;top:78px;width:1px;height:14px;background:#ffffff;"></div>
<div style="left:267px;top:91px;width:14px;height:1px;background:#808080;"></div>
<div style="left:280px;top:78px;width:1px;height:14px;background:#808080;"></div>
<div style="left:266px;top:92px;width:16px;height:1px;background:#404040;"></div>
<div style="left:281px;top:77px;width:1px;height:16px;background:#404040;"></div>
<svg style="left:266px;top:77px;shape-rendering:crispEdges" width="16" height="16" viewBox="0 0 16 16"><path d="M7 6h1v1h1v1h1v1h1v1H4V9h1V8h1V7h1z" fill="#000"/></svg>
<div style="left:266px;top:93px;width:16px;height:347px;background:#d4d0c8;"></div>
<div style="left:266px;top:93px;width:16px;height:1px;background:#d4d0c8;"></div>
<div style="left:266px;top:93px;width:1px;height:347px;background:#d4d0c8;"></div>
<div style="left:267px;top:94px;width:14px;height:1px;background:#ffffff;"></div>
<div style="left:267px;top:94px;width:1px;height:345px;background:#ffffff;"></div>
<div style="left:267px;top:438px;width:14px;height:1px;background:#808080;"></div>
<div style="left:280px;top:94px;width:1px;height:345px;background:#808080;"></div>
<div style="left:266px;top:439px;width:16px;height:1px;background:#404040;"></div>
<div style="left:281px;top:93px;width:1px;height:347px;background:#404040;"></div>
<div class="dith" style="left:266px;top:440px;width:16px;height:74px;background-position:-266px -440px"></div>
<div style="left:266px;top:514px;width:16px;height:16px;background:#d4d0c8;"></div>
<div style="left:266px;top:514px;width:16px;height:1px;background:#d4d0c8;"></div>
<div style="left:266px;top:514px;width:1px;height:16px;background:#d4d0c8;"></div>
<div style="left:267px;top:515px;width:14px;height:1px;background:#ffffff;"></div>
<div style="left:267px;top:515px;width:1px;height:14px;background:#ffffff;"></div>
<div style="left:267px;top:528px;width:14px;height:1px;background:#808080;"></div>
<div style="left:280px;top:515px;width:1px;height:14px;background:#808080;"></div>
<div style="left:266px;top:529px;width:16px;height:1px;background:#404040;"></div>
<div style="left:281px;top:514px;width:1px;height:16px;background:#404040;"></div>
<svg style="left:266px;top:514px;shape-rendering:crispEdges" width="16" height="16" viewBox="0 0 16 16"><path d="M4 6h7v1h-1v1h-1v1h-1v1H7V9H6V8H5V7H4z" fill="#000"/></svg>
<div style="left:4px;top:530px;width:16px;height:16px;background:#d4d0c8;"></div>
<div style="left:4px;top:530px;width:16px;height:1px;background:#d4d0c8;"></div>
<div style="left:4px;top:530px;width:1px;height:16px;background:#d4d0c8;"></div>
<div style="left:5px;top:531px;width:14px;height:1px;background:#ffffff;"></div>
<div style="left:5px;top:531px;width:1px;height:14px;background:#ffffff;"></div>
<div style="left:5px;top:544px;width:14px;height:1px;background:#808080;"></div>
<div style="left:18px;top:531px;width:1px;height:14px;background:#808080;"></div>
<div style="left:4px;top:545px;width:16px;height:1px;background:#404040;"></div>
<div style="left:19px;top:530px;width:1px;height:16px;background:#404040;"></div>
<svg style="left:4px;top:530px;shape-rendering:crispEdges" width="16" height="16" viewBox="0 0 16 16"><path d="M9 4h1v7H9v-1H8V9H7V8H6V7h1V6h1V5h1z" fill="#000"/></svg>
<div style="left:20px;top:530px;width:118px;height:16px;background:#d4d0c8;"></div>
<div style="left:20px;top:530px;width:118px;height:1px;background:#d4d0c8;"></div>
<div style="left:20px;top:530px;width:1px;height:16px;background:#d4d0c8;"></div>
<div style="left:21px;top:531px;width:116px;height:1px;background:#ffffff;"></div>
<div style="left:21px;top:531px;width:1px;height:14px;background:#ffffff;"></div>
<div style="left:21px;top:544px;width:116px;height:1px;background:#808080;"></div>
<div style="left:136px;top:531px;width:1px;height:14px;background:#808080;"></div>
<div style="left:20px;top:545px;width:118px;height:1px;background:#404040;"></div>
<div style="left:137px;top:530px;width:1px;height:16px;background:#404040;"></div>
<div class="dith" style="left:138px;top:530px;width:112px;height:16px;background-position:-138px -530px"></div>
<div style="left:250px;top:530px;width:16px;height:16px;background:#d4d0c8;"></div>
<div style="left:250px;top:530px;width:16px;height:1px;background:#d4d0c8;"></div>
<div style="left:250px;top:530px;width:1px;height:16px;background:#d4d0c8;"></div>
<div style="left:251px;top:531px;width:14px;height:1px;background:#ffffff;"></div>
<div style="left:251px;top:531px;width:1px;height:14px;background:#ffffff;"></div>
<div style="left:251px;top:544px;width:14px;height:1px;background:#808080;"></div>
<div style="left:264px;top:531px;width:1px;height:14px;background:#808080;"></div>
<div style="left:250px;top:545px;width:16px;height:1px;background:#404040;"></div>
<div style="left:265px;top:530px;width:1px;height:16px;background:#404040;"></div>
<svg style="left:250px;top:530px;shape-rendering:crispEdges" width="16" height="16" viewBox="0 0 16 16"><path d="M6 4h1v1h1v1h1v1h1v1H9v1H8v1H7v1H6z" fill="#000"/></svg>
<div style="left:266px;top:530px;width:16px;height:16px;background:#d4d0c8;"></div>
<div style="left:777px;top:77px;width:16px;height:16px;background:#d4d0c8;"></div>
<div style="left:777px;top:77px;width:16px;height:1px;background:#d4d0c8;"></div>
<div style="left:777px;top:77px;width:1px;height:16px;background:#d4d0c8;"></div>
<div style="left:778px;top:78px;width:14px;height:1px;background:#ffffff;"></div>
<div style="left:778px;top:78px;width:1px;height:14px;background:#ffffff;"></div>
<div style="left:778px;top:91px;width:14px;height:1px;background:#808080;"></div>
<div style="left:791px;top:78px;width:1px;height:14px;background:#808080;"></div>
<div style="left:777px;top:92px;width:16px;height:1px;background:#404040;"></div>
<div style="left:792px;top:77px;width:1px;height:16px;background:#404040;"></div>
<svg style="left:777px;top:77px;shape-rendering:crispEdges" width="16" height="16" viewBox="0 0 16 16"><path d="M7 6h1v1h1v1h1v1h1v1H4V9h1V8h1V7h1z" fill="#000"/></svg>
<div class="dith" style="left:777px;top:93px;width:16px;height:134px;background-position:-777px -93px"></div>
<div style="left:777px;top:227px;width:16px;height:239px;background:#d4d0c8;"></div>
<div style="left:777px;top:227px;width:16px;height:1px;background:#d4d0c8;"></div>
<div style="left:777px;top:227px;width:1px;height:239px;background:#d4d0c8;"></div>
<div style="left:778px;top:228px;width:14px;height:1px;background:#ffffff;"></div>
<div style="left:778px;top:228px;width:1px;height:237px;background:#ffffff;"></div>
<div style="left:778px;top:464px;width:14px;height:1px;background:#808080;"></div>
<div style="left:791px;top:228px;width:1px;height:237px;background:#808080;"></div>
<div style="left:777px;top:465px;width:16px;height:1px;background:#404040;"></div>
<div style="left:792px;top:227px;width:1px;height:239px;background:#404040;"></div>
<div class="dith" style="left:777px;top:466px;width:16px;height:48px;background-position:-777px -466px"></div>
<div style="left:777px;top:514px;width:16px;height:16px;background:#d4d0c8;"></div>
<div style="left:777px;top:514px;width:16px;height:1px;background:#d4d0c8;"></div>
<div style="left:777px;top:514px;width:1px;height:16px;background:#d4d0c8;"></div>
<div style="left:778px;top:515px;width:14px;height:1px;background:#ffffff;"></div>
<div style="left:778px;top:515px;width:1px;height:14px;background:#ffffff;"></div>
<div style="left:778px;top:528px;width:14px;height:1px;background:#808080;"></div>
<div style="left:791px;top:515px;width:1px;height:14px;background:#808080;"></div>
<div style="left:777px;top:529px;width:16px;height:1px;background:#404040;"></div>
<div style="left:792px;top:514px;width:1px;height:16px;background:#404040;"></div>
<svg style="left:777px;top:514px;shape-rendering:crispEdges" width="16" height="16" viewBox="0 0 16 16"><path d="M4 6h7v1h-1v1h-1v1h-1v1H7V9H6V8H5V7H4z" fill="#000"/></svg>
<div style="left:289px;top:530px;width:16px;height:16px;background:#d4d0c8;"></div>
<div style="left:289px;top:530px;width:16px;height:1px;background:#d4d0c8;"></div>
<div style="left:289px;top:530px;width:1px;height:16px;background:#d4d0c8;"></div>
<div style="left:290px;top:531px;width:14px;height:1px;background:#ffffff;"></div>
<div style="left:290px;top:531px;width:1px;height:14px;background:#ffffff;"></div>
<div style="left:290px;top:544px;width:14px;height:1px;background:#808080;"></div>
<div style="left:303px;top:531px;width:1px;height:14px;background:#808080;"></div>
<div style="left:289px;top:545px;width:16px;height:1px;background:#404040;"></div>
<div style="left:304px;top:530px;width:1px;height:16px;background:#404040;"></div>
<svg style="left:289px;top:530px;shape-rendering:crispEdges" width="16" height="16" viewBox="0 0 16 16"><path d="M9 4h1v7H9v-1H8V9H7V8H6V7h1V6h1V5h1z" fill="#000"/></svg>
<div style="left:305px;top:530px;width:412px;height:16px;background:#d4d0c8;"></div>
<div style="left:305px;top:530px;width:412px;height:1px;background:#d4d0c8;"></div>
<div style="left:305px;top:530px;width:1px;height:16px;background:#d4d0c8;"></div>
<div style="left:306px;top:531px;width:410px;height:1px;background:#ffffff;"></div>
<div style="left:306px;top:531px;width:1px;height:14px;background:#ffffff;"></div>
<div style="left:306px;top:544px;width:410px;height:1px;background:#808080;"></div>
<div style="left:715px;top:531px;width:1px;height:14px;background:#808080;"></div>
<div style="left:305px;top:545px;width:412px;height:1px;background:#404040;"></div>
<div style="left:716px;top:530px;width:1px;height:16px;background:#404040;"></div>
<div class="dith" style="left:717px;top:530px;width:44px;height:16px;background-position:-717px -530px"></div>
<div style="left:761px;top:530px;width:16px;height:16px;background:#d4d0c8;"></div>
<div style="left:761px;top:530px;width:16px;height:1px;background:#d4d0c8;"></div>
<div style="left:761px;top:530px;width:1px;height:16px;background:#d4d0c8;"></div>
<div style="left:762px;top:531px;width:14px;height:1px;background:#ffffff;"></div>
<div style="left:762px;top:531px;width:1px;height:14px;background:#ffffff;"></div>
<div style="left:762px;top:544px;width:14px;height:1px;background:#808080;"></div>
<div style="left:775px;top:531px;width:1px;height:14px;background:#808080;"></div>
<div style="left:761px;top:545px;width:16px;height:1px;background:#404040;"></div>
<div style="left:776px;top:530px;width:1px;height:16px;background:#404040;"></div>
<svg style="left:761px;top:530px;shape-rendering:crispEdges" width="16" height="16" viewBox="0 0 16 16"><path d="M6 4h1v1h1v1h1v1h1v1H9v1H8v1H7v1H6z" fill="#000"/></svg>
<div style="left:777px;top:530px;width:16px;height:16px;background:#d4d0c8;"></div>
</body></html>
